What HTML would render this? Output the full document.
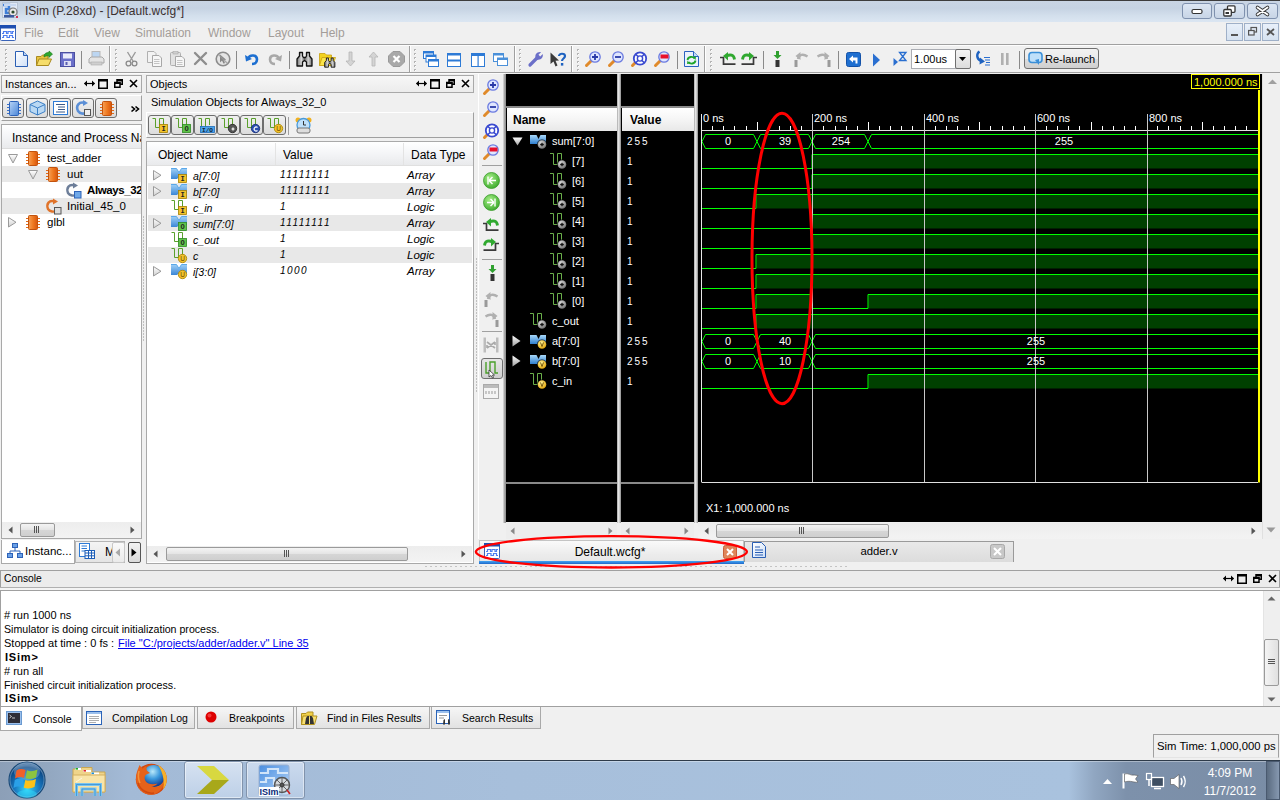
<!DOCTYPE html><html><head><meta charset="utf-8"><style>
html,body{margin:0;padding:0;width:1280px;height:800px;overflow:hidden;background:#f0f0f0;position:relative}
.t{position:absolute;white-space:nowrap;line-height:1;font-family:"Liberation Sans",sans-serif}
.r{position:absolute;display:block}
svg.r{overflow:visible}
</style></head><body><svg width="0" height="0" style="position:absolute"><defs><linearGradient id="gdoc" x1="0" y1="0" x2="1" y2="1"><stop offset="0" stop-color="#fff"/><stop offset="1" stop-color="#cfe0f7"/></linearGradient><linearGradient id="gchip" x1="0" y1="0" x2="1" y2="0"><stop offset="0" stop-color="#f7a055"/><stop offset="0.5" stop-color="#ef7a22"/><stop offset="1" stop-color="#d9560c"/></linearGradient><linearGradient id="gtri" x1="0" y1="0" x2="0" y2="1"><stop offset="0" stop-color="#fff"/><stop offset="1" stop-color="#cfcfcf"/></linearGradient><linearGradient id="gbus" x1="0" y1="0" x2="0" y2="1"><stop offset="0" stop-color="#9fd0f7"/><stop offset="1" stop-color="#3b86d6"/></linearGradient><radialGradient id="ggreen" cx="0.4" cy="0.35" r="0.7"><stop offset="0" stop-color="#a8f08a"/><stop offset="1" stop-color="#3aa82a"/></radialGradient><linearGradient id="gbus2" x1="0" y1="0" x2="0" y2="1"><stop offset="0" stop-color="#a8d8fa"/><stop offset="1" stop-color="#2f7fd0"/></linearGradient><radialGradient id="ggray" cx="0.4" cy="0.35" r="0.7"><stop offset="0" stop-color="#e8e8e8"/><stop offset="1" stop-color="#6a6a6a"/></radialGradient><radialGradient id="gyel" cx="0.4" cy="0.35" r="0.7"><stop offset="0" stop-color="#fff6a0"/><stop offset="1" stop-color="#e0a000"/></radialGradient><linearGradient id="gtri2" x1="0" y1="0" x2="0" y2="1"><stop offset="0" stop-color="#fff"/><stop offset="1" stop-color="#a0a0a0"/></linearGradient><radialGradient id="gorb" cx="0.5" cy="0.75" r="0.75"><stop offset="0" stop-color="#38d8f8"/><stop offset="0.45" stop-color="#1878c0"/><stop offset="0.8" stop-color="#0c4a88"/><stop offset="1" stop-color="#6a90b8"/></radialGradient><linearGradient id="gisim" x1="0" y1="0" x2="1" y2="1"><stop offset="0" stop-color="#4a8ee0"/><stop offset="0.6" stop-color="#8ab8ee"/><stop offset="1" stop-color="#d8e8f8"/></linearGradient><radialGradient id="gff" cx="0.55" cy="0.4" r="0.6"><stop offset="0" stop-color="#6ac0f0"/><stop offset="1" stop-color="#1e4fa8"/></radialGradient><radialGradient id="gfox" cx="0.5" cy="0.5" r="0.5"><stop offset="0.6" stop-color="#f08a28"/><stop offset="1" stop-color="#d0400c"/></radialGradient><radialGradient id="gglobe" cx="0.45" cy="0.3" r="0.75"><stop offset="0" stop-color="#b8e8fa"/><stop offset="0.45" stop-color="#3a98dc"/><stop offset="1" stop-color="#0c2a80"/></radialGradient><linearGradient id="gbino" x1="0" y1="0" x2="1" y2="0"><stop offset="0" stop-color="#777"/><stop offset="0.3" stop-color="#d8d8d8"/><stop offset="0.5" stop-color="#666"/><stop offset="0.75" stop-color="#d0d0d0"/><stop offset="1" stop-color="#777"/></linearGradient><linearGradient id="gbluechip" x1="0" y1="0" x2="1" y2="1"><stop offset="0" stop-color="#b8d4f6"/><stop offset="1" stop-color="#4a86d8"/></linearGradient></defs></svg>
<div class="r" style="left:0px;top:0px;width:1280px;height:1px;background:#3d3d3d"></div>
<div class="r" style="left:0px;top:1px;width:1280px;height:21px;background:linear-gradient(#c9d5e4 0%,#c6d3e3 35%,#d3dfec 70%,#dbe6f2 100%)"></div>
<svg class="r" style="left:2px;top:2px;" width="17" height="16" viewBox="0 0 17 16"><rect x="0.5" y="0.5" width="15" height="15" fill="#dfe8f5" stroke="#b8c4d4"/><path d="M1 3 H7 V7 H4 V11 H8" fill="none" stroke="#3f7fd8" stroke-width="2.5"/><rect x="2" y="2" width="12" height="2" fill="#c8d8f0"/><circle cx="11" cy="10" r="4" fill="#e8e8e8" stroke="#777" stroke-width="1.2"/><circle cx="11" cy="10" r="1.6" fill="#2a4a2a"/><rect x="2" y="13" width="10" height="2.5" fill="#3a5aa0"/><rect x="14" y="14" width="2" height="2" fill="#d03050"/></svg>
<div class="t " style="left:25px;top:4.84px;font-size:12px;color:#3b3030;font-weight:normal;font-style:normal;">ISim (P.28xd) - [Default.wcfg*]</div>
<div class="r" style="left:1182px;top:3px;width:30px;height:16px;border:1px solid #7f91ae;border-radius:3px;box-sizing:border-box;background:linear-gradient(#dce6f3,#c8d5e6)"></div>

<svg class="r" style="left:1191px;top:8px;" width="12" height="7" viewBox="0 0 12 7"><rect x="1" y="1.5" width="10" height="4" rx="1.5" fill="#fff" stroke="#333" stroke-width="1.2"/></svg>
<div class="r" style="left:1214px;top:3px;width:31px;height:16px;border:1px solid #7f91ae;border-radius:3px;box-sizing:border-box;background:linear-gradient(#dce6f3,#c8d5e6)"></div>

<svg class="r" style="left:1223px;top:5px;" width="13" height="12" viewBox="0 0 13 12"><rect x="4.5" y="0.8" width="7.5" height="6.5" rx="1" fill="#fff" stroke="#333" stroke-width="1.3"/><rect x="0.8" y="4.5" width="7.5" height="6.5" rx="1" fill="#fff" stroke="#333" stroke-width="1.3"/><rect x="2.5" y="7" width="3.5" height="2" fill="#333"/></svg>
<div class="r" style="left:1247px;top:3px;width:31px;height:16px;border:1px solid #7f91ae;border-radius:3px;box-sizing:border-box;background:linear-gradient(#dce6f3,#c8d5e6)"></div>

<svg class="r" style="left:1256px;top:6px;" width="13" height="10" viewBox="0 0 13 10"><path d="M1.5 1.5 L11.5 8.5 M11.5 1.5 L1.5 8.5" stroke="#333" stroke-width="3.6" stroke-linecap="round"/><path d="M1.5 1.5 L11.5 8.5 M11.5 1.5 L1.5 8.5" stroke="#fff" stroke-width="1.8" stroke-linecap="round"/></svg>
<div class="r" style="left:0px;top:22px;width:1280px;height:22px;background:#f0f0f0"></div>
<svg class="r" style="left:0px;top:25px;" width="16" height="16" viewBox="0 0 16 16"><rect x="0.5" y="0.5" width="15" height="15" rx="1" fill="#fff" stroke="#3a64b8"/><rect x="0" y="0" width="16" height="3.5" fill="#1f4fb0"/><path d="M2 8.5 H3.5 V6.5 H6.5 V8.5 H8 V6.5 H11 V8.5 H12.5 V6.5 H14" fill="none" stroke="#4f7ff0" stroke-width="1.2"/><path d="M2 12.5 H3.5 V10.5 H7 V12.5 H9.5 V10.5 H12.5 V12.5 H14" fill="none" stroke="#4f7ff0" stroke-width="1.2"/></svg>
<div class="t " style="left:24px;top:26.84px;font-size:12px;color:#a39d99;font-weight:normal;font-style:normal;">File</div>
<div class="t " style="left:58px;top:26.84px;font-size:12px;color:#a39d99;font-weight:normal;font-style:normal;">Edit</div>
<div class="t " style="left:94px;top:26.84px;font-size:12px;color:#a39d99;font-weight:normal;font-style:normal;">View</div>
<div class="t " style="left:135px;top:26.84px;font-size:12px;color:#a39d99;font-weight:normal;font-style:normal;">Simulation</div>
<div class="t " style="left:208px;top:26.84px;font-size:12px;color:#a39d99;font-weight:normal;font-style:normal;">Window</div>
<div class="t " style="left:268px;top:26.84px;font-size:12px;color:#a39d99;font-weight:normal;font-style:normal;">Layout</div>
<div class="t " style="left:320px;top:26.84px;font-size:12px;color:#a39d99;font-weight:normal;font-style:normal;">Help</div>
<div class="r" style="left:1226px;top:23px;width:17px;height:18px;border:1px solid #9fb0c8;box-sizing:border-box;background:linear-gradient(#e8f0fa,#d6e2f0)"></div>
<div class="r" style="left:1244px;top:23px;width:17px;height:18px;border:1px solid #9fb0c8;box-sizing:border-box;background:linear-gradient(#e8f0fa,#d6e2f0)"></div>
<div class="r" style="left:1262px;top:23px;width:17px;height:18px;border:1px solid #9fb0c8;box-sizing:border-box;background:linear-gradient(#e8f0fa,#d6e2f0)"></div>
<svg class="r" style="left:1230px;top:33px;" width="9" height="4" viewBox="0 0 9 4"><rect x="1" y="1" width="7" height="2" fill="#555"/></svg>
<svg class="r" style="left:1248px;top:27px;" width="9" height="9" viewBox="0 0 9 9"><rect x="3" y="0.5" width="5.5" height="4.5" fill="none" stroke="#555" stroke-width="1.2"/><rect x="0.6" y="3.5" width="5.5" height="4.5" fill="#e3ebf6" stroke="#555" stroke-width="1.2"/></svg>
<svg class="r" style="left:1266px;top:28px;" width="9" height="8" viewBox="0 0 9 8"><path d="M1 1 L8 7 M8 1 L1 7" stroke="#555" stroke-width="1.8"/></svg>
<div class="r" style="left:0px;top:44px;width:1280px;height:1px;background:#a0a0a0"></div>
<div class="r" style="left:0px;top:45px;width:1280px;height:1px;background:#fdfdfd"></div>
<div class="r" style="left:0px;top:46px;width:1280px;height:26px;background:#f0f0f0"></div>
<div class="r" style="left:0px;top:72px;width:1280px;height:1px;background:#a0a0a0"></div>
<div class="r" style="left:0px;top:73px;width:1280px;height:1px;background:#fbfbfb"></div>
<div class="r" style="left:6px;top:50px;width:1px;height:1px;background:#ffffff"></div>
<div class="r" style="left:5px;top:49px;width:2px;height:1px;background:#b4b4b4"></div>
<div class="r" style="left:5px;top:50px;width:1px;height:1px;background:#b4b4b4"></div>
<div class="r" style="left:6px;top:54px;width:1px;height:1px;background:#ffffff"></div>
<div class="r" style="left:5px;top:53px;width:2px;height:1px;background:#b4b4b4"></div>
<div class="r" style="left:5px;top:54px;width:1px;height:1px;background:#b4b4b4"></div>
<div class="r" style="left:6px;top:58px;width:1px;height:1px;background:#ffffff"></div>
<div class="r" style="left:5px;top:57px;width:2px;height:1px;background:#b4b4b4"></div>
<div class="r" style="left:5px;top:58px;width:1px;height:1px;background:#b4b4b4"></div>
<div class="r" style="left:6px;top:62px;width:1px;height:1px;background:#ffffff"></div>
<div class="r" style="left:5px;top:61px;width:2px;height:1px;background:#b4b4b4"></div>
<div class="r" style="left:5px;top:62px;width:1px;height:1px;background:#b4b4b4"></div>
<div class="r" style="left:6px;top:66px;width:1px;height:1px;background:#ffffff"></div>
<div class="r" style="left:5px;top:65px;width:2px;height:1px;background:#b4b4b4"></div>
<div class="r" style="left:5px;top:66px;width:1px;height:1px;background:#b4b4b4"></div>
<div class="r" style="left:6px;top:70px;width:1px;height:1px;background:#ffffff"></div>
<div class="r" style="left:5px;top:69px;width:2px;height:1px;background:#b4b4b4"></div>
<div class="r" style="left:5px;top:70px;width:1px;height:1px;background:#b4b4b4"></div>
<div class="r" style="left:116px;top:50px;width:1px;height:1px;background:#ffffff"></div>
<div class="r" style="left:115px;top:49px;width:2px;height:1px;background:#b4b4b4"></div>
<div class="r" style="left:115px;top:50px;width:1px;height:1px;background:#b4b4b4"></div>
<div class="r" style="left:116px;top:54px;width:1px;height:1px;background:#ffffff"></div>
<div class="r" style="left:115px;top:53px;width:2px;height:1px;background:#b4b4b4"></div>
<div class="r" style="left:115px;top:54px;width:1px;height:1px;background:#b4b4b4"></div>
<div class="r" style="left:116px;top:58px;width:1px;height:1px;background:#ffffff"></div>
<div class="r" style="left:115px;top:57px;width:2px;height:1px;background:#b4b4b4"></div>
<div class="r" style="left:115px;top:58px;width:1px;height:1px;background:#b4b4b4"></div>
<div class="r" style="left:116px;top:62px;width:1px;height:1px;background:#ffffff"></div>
<div class="r" style="left:115px;top:61px;width:2px;height:1px;background:#b4b4b4"></div>
<div class="r" style="left:115px;top:62px;width:1px;height:1px;background:#b4b4b4"></div>
<div class="r" style="left:116px;top:66px;width:1px;height:1px;background:#ffffff"></div>
<div class="r" style="left:115px;top:65px;width:2px;height:1px;background:#b4b4b4"></div>
<div class="r" style="left:115px;top:66px;width:1px;height:1px;background:#b4b4b4"></div>
<div class="r" style="left:116px;top:70px;width:1px;height:1px;background:#ffffff"></div>
<div class="r" style="left:115px;top:69px;width:2px;height:1px;background:#b4b4b4"></div>
<div class="r" style="left:115px;top:70px;width:1px;height:1px;background:#b4b4b4"></div>
<div class="r" style="left:415px;top:50px;width:1px;height:1px;background:#ffffff"></div>
<div class="r" style="left:414px;top:49px;width:2px;height:1px;background:#b4b4b4"></div>
<div class="r" style="left:414px;top:50px;width:1px;height:1px;background:#b4b4b4"></div>
<div class="r" style="left:415px;top:54px;width:1px;height:1px;background:#ffffff"></div>
<div class="r" style="left:414px;top:53px;width:2px;height:1px;background:#b4b4b4"></div>
<div class="r" style="left:414px;top:54px;width:1px;height:1px;background:#b4b4b4"></div>
<div class="r" style="left:415px;top:58px;width:1px;height:1px;background:#ffffff"></div>
<div class="r" style="left:414px;top:57px;width:2px;height:1px;background:#b4b4b4"></div>
<div class="r" style="left:414px;top:58px;width:1px;height:1px;background:#b4b4b4"></div>
<div class="r" style="left:415px;top:62px;width:1px;height:1px;background:#ffffff"></div>
<div class="r" style="left:414px;top:61px;width:2px;height:1px;background:#b4b4b4"></div>
<div class="r" style="left:414px;top:62px;width:1px;height:1px;background:#b4b4b4"></div>
<div class="r" style="left:415px;top:66px;width:1px;height:1px;background:#ffffff"></div>
<div class="r" style="left:414px;top:65px;width:2px;height:1px;background:#b4b4b4"></div>
<div class="r" style="left:414px;top:66px;width:1px;height:1px;background:#b4b4b4"></div>
<div class="r" style="left:415px;top:70px;width:1px;height:1px;background:#ffffff"></div>
<div class="r" style="left:414px;top:69px;width:2px;height:1px;background:#b4b4b4"></div>
<div class="r" style="left:414px;top:70px;width:1px;height:1px;background:#b4b4b4"></div>
<div class="r" style="left:520px;top:50px;width:1px;height:1px;background:#ffffff"></div>
<div class="r" style="left:519px;top:49px;width:2px;height:1px;background:#b4b4b4"></div>
<div class="r" style="left:519px;top:50px;width:1px;height:1px;background:#b4b4b4"></div>
<div class="r" style="left:520px;top:54px;width:1px;height:1px;background:#ffffff"></div>
<div class="r" style="left:519px;top:53px;width:2px;height:1px;background:#b4b4b4"></div>
<div class="r" style="left:519px;top:54px;width:1px;height:1px;background:#b4b4b4"></div>
<div class="r" style="left:520px;top:58px;width:1px;height:1px;background:#ffffff"></div>
<div class="r" style="left:519px;top:57px;width:2px;height:1px;background:#b4b4b4"></div>
<div class="r" style="left:519px;top:58px;width:1px;height:1px;background:#b4b4b4"></div>
<div class="r" style="left:520px;top:62px;width:1px;height:1px;background:#ffffff"></div>
<div class="r" style="left:519px;top:61px;width:2px;height:1px;background:#b4b4b4"></div>
<div class="r" style="left:519px;top:62px;width:1px;height:1px;background:#b4b4b4"></div>
<div class="r" style="left:520px;top:66px;width:1px;height:1px;background:#ffffff"></div>
<div class="r" style="left:519px;top:65px;width:2px;height:1px;background:#b4b4b4"></div>
<div class="r" style="left:519px;top:66px;width:1px;height:1px;background:#b4b4b4"></div>
<div class="r" style="left:520px;top:70px;width:1px;height:1px;background:#ffffff"></div>
<div class="r" style="left:519px;top:69px;width:2px;height:1px;background:#b4b4b4"></div>
<div class="r" style="left:519px;top:70px;width:1px;height:1px;background:#b4b4b4"></div>
<div class="r" style="left:578px;top:50px;width:1px;height:1px;background:#ffffff"></div>
<div class="r" style="left:577px;top:49px;width:2px;height:1px;background:#b4b4b4"></div>
<div class="r" style="left:577px;top:50px;width:1px;height:1px;background:#b4b4b4"></div>
<div class="r" style="left:578px;top:54px;width:1px;height:1px;background:#ffffff"></div>
<div class="r" style="left:577px;top:53px;width:2px;height:1px;background:#b4b4b4"></div>
<div class="r" style="left:577px;top:54px;width:1px;height:1px;background:#b4b4b4"></div>
<div class="r" style="left:578px;top:58px;width:1px;height:1px;background:#ffffff"></div>
<div class="r" style="left:577px;top:57px;width:2px;height:1px;background:#b4b4b4"></div>
<div class="r" style="left:577px;top:58px;width:1px;height:1px;background:#b4b4b4"></div>
<div class="r" style="left:578px;top:62px;width:1px;height:1px;background:#ffffff"></div>
<div class="r" style="left:577px;top:61px;width:2px;height:1px;background:#b4b4b4"></div>
<div class="r" style="left:577px;top:62px;width:1px;height:1px;background:#b4b4b4"></div>
<div class="r" style="left:578px;top:66px;width:1px;height:1px;background:#ffffff"></div>
<div class="r" style="left:577px;top:65px;width:2px;height:1px;background:#b4b4b4"></div>
<div class="r" style="left:577px;top:66px;width:1px;height:1px;background:#b4b4b4"></div>
<div class="r" style="left:578px;top:70px;width:1px;height:1px;background:#ffffff"></div>
<div class="r" style="left:577px;top:69px;width:2px;height:1px;background:#b4b4b4"></div>
<div class="r" style="left:577px;top:70px;width:1px;height:1px;background:#b4b4b4"></div>
<div class="r" style="left:711px;top:50px;width:1px;height:1px;background:#ffffff"></div>
<div class="r" style="left:710px;top:49px;width:2px;height:1px;background:#b4b4b4"></div>
<div class="r" style="left:710px;top:50px;width:1px;height:1px;background:#b4b4b4"></div>
<div class="r" style="left:711px;top:54px;width:1px;height:1px;background:#ffffff"></div>
<div class="r" style="left:710px;top:53px;width:2px;height:1px;background:#b4b4b4"></div>
<div class="r" style="left:710px;top:54px;width:1px;height:1px;background:#b4b4b4"></div>
<div class="r" style="left:711px;top:58px;width:1px;height:1px;background:#ffffff"></div>
<div class="r" style="left:710px;top:57px;width:2px;height:1px;background:#b4b4b4"></div>
<div class="r" style="left:710px;top:58px;width:1px;height:1px;background:#b4b4b4"></div>
<div class="r" style="left:711px;top:62px;width:1px;height:1px;background:#ffffff"></div>
<div class="r" style="left:710px;top:61px;width:2px;height:1px;background:#b4b4b4"></div>
<div class="r" style="left:710px;top:62px;width:1px;height:1px;background:#b4b4b4"></div>
<div class="r" style="left:711px;top:66px;width:1px;height:1px;background:#ffffff"></div>
<div class="r" style="left:710px;top:65px;width:2px;height:1px;background:#b4b4b4"></div>
<div class="r" style="left:710px;top:66px;width:1px;height:1px;background:#b4b4b4"></div>
<div class="r" style="left:711px;top:70px;width:1px;height:1px;background:#ffffff"></div>
<div class="r" style="left:710px;top:69px;width:2px;height:1px;background:#b4b4b4"></div>
<div class="r" style="left:710px;top:70px;width:1px;height:1px;background:#b4b4b4"></div>
<div class="r" style="left:109px;top:46px;width:1px;height:26px;background:#a0a0a0"></div>
<div class="r" style="left:110px;top:46px;width:1px;height:26px;background:#fff"></div>
<div class="r" style="left:409px;top:46px;width:1px;height:26px;background:#a0a0a0"></div>
<div class="r" style="left:410px;top:46px;width:1px;height:26px;background:#fff"></div>
<div class="r" style="left:514px;top:46px;width:1px;height:26px;background:#a0a0a0"></div>
<div class="r" style="left:515px;top:46px;width:1px;height:26px;background:#fff"></div>
<div class="r" style="left:571px;top:46px;width:1px;height:26px;background:#a0a0a0"></div>
<div class="r" style="left:572px;top:46px;width:1px;height:26px;background:#fff"></div>
<div class="r" style="left:704px;top:46px;width:1px;height:26px;background:#a0a0a0"></div>
<div class="r" style="left:705px;top:46px;width:1px;height:26px;background:#fff"></div>
<div class="r" style="left:81px;top:51px;width:1px;height:18px;background:#8a8a8a"></div>
<div class="r" style="left:236px;top:51px;width:1px;height:18px;background:#8a8a8a"></div>
<div class="r" style="left:289px;top:51px;width:1px;height:18px;background:#8a8a8a"></div>
<div class="r" style="left:677px;top:51px;width:1px;height:18px;background:#8a8a8a"></div>
<div class="r" style="left:763px;top:51px;width:1px;height:18px;background:#8a8a8a"></div>
<div class="r" style="left:838px;top:51px;width:1px;height:18px;background:#8a8a8a"></div>
<div class="r" style="left:1019px;top:51px;width:1px;height:18px;background:#8a8a8a"></div>
<svg class="r" style="left:14px;top:51px;" width="15" height="16" viewBox="0 0 15 16"><path d="M1.5 0.5 H9.5 L13.5 4.5 V15.5 H1.5 Z" fill="url(#gdoc)" stroke="#2b5fb4"/><path d="M9.5 0.5 V4.5 H13.5" fill="#b9d3f5" stroke="#2b5fb4"/></svg>
<svg class="r" style="left:36px;top:51px;" width="17" height="16" viewBox="0 0 17 16"><path d="M0.5 5.5 H5 L6.5 4 H12 V14.5 H0.5Z" fill="#e8c440" stroke="#a98a20"/><path d="M0.5 14.5 L3 8 H15.5 L12.5 14.5Z" fill="#f6dd6a" stroke="#a98a20"/><path d="M8 6 C8 2.5 10 1.5 13 1.5 V0 L16.5 3 L13 6.5 V4.8 C11 4.8 9.5 5 8 6Z" fill="#2ea82e" stroke="#16751a" stroke-width="0.6"/></svg>
<svg class="r" style="left:60px;top:52px;" width="15" height="15" viewBox="0 0 15 15"><rect x="0.5" y="0.5" width="14" height="14" fill="#6a6fc9" stroke="#4b4fa0"/><rect x="3" y="1.5" width="9" height="5" fill="#e9ebfa"/><rect x="4" y="9" width="7" height="5" fill="#dfe0f5"/><rect x="5.5" y="10" width="2" height="3" fill="#5a5fb0"/></svg>
<svg class="r" style="left:88px;top:51px;" width="17" height="16" viewBox="0 0 17 16"><rect x="4" y="0.5" width="8" height="6" fill="#bcd6f2" stroke="#b8b8b8"/><path d="M1 8 L3 6 H14 L16 8 V12 H1Z" fill="#e4e4e4" stroke="#a8a8a8"/><rect x="3" y="11" width="11" height="3" fill="#cfcfcf" stroke="#aaa" stroke-width="0.6"/></svg>
<svg class="r" style="left:125px;top:51px;" width="13" height="16" viewBox="0 0 13 16"><path d="M2.5 1 L8 10 M10.5 1 L5 10" stroke="#9a9a9a" stroke-width="1.4"/><circle cx="3.5" cy="12.5" r="2.4" fill="none" stroke="#8a8a8a" stroke-width="1.3"/><circle cx="9.5" cy="12.5" r="2.4" fill="none" stroke="#8a8a8a" stroke-width="1.3"/></svg>
<svg class="r" style="left:147px;top:51px;" width="15" height="16" viewBox="0 0 15 16"><path d="M0.5 0.5 H7 L9 2.5 V11.5 H0.5Z" fill="#f3f3f3" stroke="#b0b0b0"/><path d="M5.5 4.5 H12 L14.5 7 V15.5 H5.5Z" fill="#f7f7f7" stroke="#a8a8a8"/><path d="M7 8.5 H12.5 M7 10.5 H12.5 M7 12.5 H12.5" stroke="#c4c4c4"/></svg>
<svg class="r" style="left:170px;top:51px;" width="15" height="16" viewBox="0 0 15 16"><rect x="0.5" y="1.5" width="10" height="13" rx="1" fill="#e2e2e2" stroke="#b0b0b0"/><rect x="3" y="0.5" width="5" height="2.5" fill="#cfcfcf" stroke="#aaa" stroke-width="0.6"/><path d="M5.5 5.5 H12 L14.5 8 V15.5 H5.5Z" fill="#f7f7f7" stroke="#a8a8a8"/><path d="M7 9.5 H12.5 M7 11.5 H12.5 M7 13.5 H12.5" stroke="#c4c4c4"/></svg>
<svg class="r" style="left:193px;top:51px;" width="15" height="15" viewBox="0 0 15 15"><path d="M2 2 L13 13 M13 2 L2 13" stroke="#8e8e8e" stroke-width="2.4" stroke-linecap="round"/></svg>
<svg class="r" style="left:215px;top:51px;" width="16" height="16" viewBox="0 0 16 16"><circle cx="8" cy="8" r="6.8" fill="#e4e4e4" stroke="#8c8c8c" stroke-width="1.6"/><path d="M5 3.5 L5 11.5 L7 9.6 L8.6 12.8 L10 12.1 L8.6 9 L11.2 8.8Z" fill="#858585"/><path d="M3.5 3.5 L12.5 12.5" stroke="#9a9a9a" stroke-width="1.3" opacity="0.8"/></svg>
<svg class="r" style="left:245px;top:53px;" width="14" height="12" viewBox="0 0 14 12"><path d="M3.5 5 C5 1.5 12 1.5 12 6.5 C12 9.5 9.5 11 7 11" fill="none" stroke="#1d6fd1" stroke-width="2.6"/><path d="M0 2 L1 8.5 L7 6Z" fill="#1d6fd1"/></svg>
<svg class="r" style="left:268px;top:53px;" width="14" height="12" viewBox="0 0 14 12"><path d="M10.5 5 C9 1.5 2 1.5 2 6.5 C2 9.5 4.5 11 7 11" fill="none" stroke="#a8a8a8" stroke-width="2.6"/><path d="M14 2 L13 8.5 L7 6Z" fill="#a8a8a8"/></svg>
<svg class="r" style="left:296px;top:51px;" width="17" height="16" viewBox="0 0 17 16"><path d="M3.5 1.5 H6.5 V5 L7.5 6.5 H9.5 L10.5 5 V1.5 H13.5 V5 L16 8 V15 H10.5 V11 L8.5 9.5 L6.5 11 V15 H1 V8 L3.5 5Z" fill="url(#gbino)" stroke="#111" stroke-width="1.3" stroke-linejoin="round"/></svg>
<svg class="r" style="left:319px;top:51px;" width="17" height="16" viewBox="0 0 17 16"><path d="M0.5 2.5 H6 L7.5 4 H12.5 V14.5 H0.5Z" fill="#f2d21e" stroke="#c8a010" stroke-width="0.8"/><path d="M0.5 14.5 L3 6.5 H16.5 L13.5 14.5Z" fill="#fbe54a" stroke="#c8a010" stroke-width="0.8"/><g transform="translate(5,6) scale(0.68)"><path d="M3.5 1.5 H6.5 V5 L7.5 6.5 H9.5 L10.5 5 V1.5 H13.5 V5 L16 8 V15 H10.5 V11 L8.5 9.5 L6.5 11 V15 H1 V8 L3.5 5Z" fill="url(#gbino)" stroke="#111" stroke-width="1.3" stroke-linejoin="round"/></g></svg>
<svg class="r" style="left:346px;top:51px;" width="9" height="16" viewBox="0 0 9 16"><path d="M3 1 H6 V10 H9 L4.5 15 L0 10 H3Z" fill="#d4d4d4" stroke="#b5b5b5" stroke-width="0.8"/></svg>
<svg class="r" style="left:369px;top:51px;" width="9" height="16" viewBox="0 0 9 16"><path d="M3 15 H6 V6 H9 L4.5 1 L0 6 H3Z" fill="#d4d4d4" stroke="#b5b5b5" stroke-width="0.8"/></svg>
<svg class="r" style="left:388px;top:51px;" width="17" height="16" viewBox="0 0 17 16"><path d="M5 0.5 H12 L16.5 5 V11 L12 15.5 H5 L0.5 11 V5Z" fill="#a9a9a9" stroke="#9a9a9a"/><path d="M5.5 5 L11.5 11 M11.5 5 L5.5 11" stroke="#fff" stroke-width="2.2"/></svg>
<svg class="r" style="left:423px;top:51px;" width="16" height="16" viewBox="0 0 16 16"><rect x="0.5" y="0.5" width="10" height="7" fill="#fff" stroke="#2e7bd6"/><rect x="0.5" y="0.5" width="10" height="2" fill="#2e7bd6"/><rect x="3" y="4" width="10" height="7" fill="#fff" stroke="#2e7bd6"/><rect x="3" y="4" width="10" height="2" fill="#2e7bd6"/><rect x="5.5" y="8.5" width="10" height="7" fill="#fff" stroke="#2e7bd6"/><rect x="5.5" y="8.5" width="10" height="2" fill="#2e7bd6"/></svg>
<svg class="r" style="left:447px;top:53px;" width="14" height="14" viewBox="0 0 14 14"><rect x="0.5" y="0.5" width="13" height="13" fill="#fff" stroke="#2e7bd6"/><rect x="0.5" y="0.5" width="13" height="2" fill="#2e7bd6"/><rect x="0.5" y="6.5" width="13" height="2" fill="#2e7bd6"/></svg>
<svg class="r" style="left:471px;top:53px;" width="14" height="14" viewBox="0 0 14 14"><rect x="0.5" y="0.5" width="13" height="13" fill="#fff" stroke="#2e7bd6"/><rect x="0.5" y="0.5" width="13" height="2.5" fill="#2e7bd6"/><rect x="6.5" y="2" width="1.2" height="11" fill="#2e7bd6"/></svg>
<svg class="r" style="left:493px;top:53px;" width="15" height="13" viewBox="0 0 15 13"><rect x="0.5" y="0.5" width="10" height="8" fill="#fff" stroke="#4a90d9"/><rect x="0.5" y="0.5" width="10" height="2" fill="#4a90d9"/><rect x="4.5" y="5" width="10" height="7.5" fill="#fff" stroke="#4a90d9"/><rect x="4.5" y="5" width="10" height="2" fill="#4a90d9"/></svg>
<svg class="r" style="left:528px;top:51px;" width="16" height="16" viewBox="0 0 16 16"><path d="M2 14 L9 7" stroke="#6b6fc8" stroke-width="3.2" stroke-linecap="round"/><path d="M8 8 C6 4 9 0.5 13 1.2 L10.5 3.8 L12.2 5.5 L14.8 3 C15.5 7 12 10 8 8Z" fill="#6b6fc8"/></svg>
<svg class="r" style="left:550px;top:52px;" width="16" height="16" viewBox="0 0 16 16"><path d="M0.5 0.5 L0.5 12 L3.5 9.5 L5.5 14.5 L7.5 13.5 L5.5 8.7 L9 8.5Z" fill="#3a3a3a"/><path d="M9 4 C9 1 15 1 15 4 C15 6.5 12 6.5 12 9" fill="none" stroke="#1e62c0" stroke-width="2.2"/><rect x="10.9" y="11" width="2.4" height="2.6" fill="#1e62c0"/></svg>
<svg class="r" style="left:585px;top:51px;" width="16" height="16" viewBox="0 0 16 16"><path d="M1.5 14.5 L6 10" stroke="#e08a2a" stroke-width="3" stroke-linecap="round"/><circle cx="10" cy="6" r="5.2" fill="#dfe6ff" stroke="#6a7ae0" stroke-width="1.3"/><path d="M7 6 H13 M10 3 V9" stroke="#2a3aa8" stroke-width="1.8"/></svg>
<svg class="r" style="left:608px;top:51px;" width="16" height="16" viewBox="0 0 16 16"><path d="M1.5 14.5 L6 10" stroke="#e08a2a" stroke-width="3" stroke-linecap="round"/><circle cx="10" cy="6" r="5.2" fill="#dfe6ff" stroke="#6a7ae0" stroke-width="1.3"/><path d="M7 6 H13" stroke="#2a3aa8" stroke-width="1.8"/></svg>
<svg class="r" style="left:631px;top:51px;" width="16" height="16" viewBox="0 0 16 16"><path d="M1.5 14.5 L4 12" stroke="#e08a2a" stroke-width="3" stroke-linecap="round"/><circle cx="9" cy="7.5" r="6.2" fill="#fff" stroke="#3a4ad0" stroke-width="1.8"/><circle cx="9" cy="7.5" r="2.6" fill="#fff" stroke="#3a4ad0" stroke-width="1.4"/><path d="M4.5 3 L7 5.5 M13.5 3 L11 5.5 M4.5 12 L7 9.5 M13.5 12 L11 9.5" stroke="#3a4ad0" stroke-width="1.6"/></svg>
<svg class="r" style="left:654px;top:51px;" width="16" height="16" viewBox="0 0 16 16"><path d="M1.5 14.5 L6 10" stroke="#e08a2a" stroke-width="3" stroke-linecap="round"/><circle cx="10" cy="6" r="5.2" fill="#dfe6ff" stroke="#6a7ae0" stroke-width="1.3"/><rect x="6.5" y="3.5" width="8" height="4" fill="#e8102a"/></svg>
<svg class="r" style="left:684px;top:51px;" width="15" height="16" viewBox="0 0 15 16"><path d="M0.5 0.5 H9.5 L14.5 5.5 V15.5 H0.5Z" fill="#eaf2fc" stroke="#2b62c0"/><path d="M9.5 0.5 V5.5 H14.5" fill="#c5dcf5" stroke="#2b62c0"/><path d="M3.5 9 C4 5.5 9 5 10.5 7.5" fill="none" stroke="#1fa52a" stroke-width="1.8"/><path d="M11.5 9.5 C11 13 6 13.5 4.5 11" fill="none" stroke="#1fa52a" stroke-width="1.8"/><path d="M9 6 L12 5.5 L11.5 9Z M6 12.5 L3 13 L3.5 9.5Z" fill="#1fa52a"/></svg>
<svg class="r" style="left:720px;top:52px;" width="16" height="15" viewBox="0 0 16 15"><path d="M0 5.5 H3.5 V12.2 H15.5" fill="none" stroke="#3a3a3a" stroke-width="1.7"/><path d="M6.5 4 C10 2.2 14 2.5 14.5 7.5" fill="none" stroke="#2fa82f" stroke-width="2.8"/><path d="M3 4 L8 0 V8.5Z" fill="#2fa82f"/></svg>
<svg class="r" style="left:741px;top:52px;" width="16" height="15" viewBox="0 0 16 15"><path d="M0.5 12.2 H12.5 V5.5 H16" fill="none" stroke="#3a3a3a" stroke-width="1.7"/><path d="M9.5 4 C6 2.2 2 2.5 1.5 7.5" fill="none" stroke="#2fa82f" stroke-width="2.8"/><path d="M13 4 L8 0 V8.5Z" fill="#2fa82f"/></svg>
<svg class="r" style="left:773px;top:51px;" width="9" height="16" viewBox="0 0 9 16"><path d="M3 0 H6 V4 H8.5 L4.5 8 L0.5 4 H3Z" fill="#2fa02f"/><rect x="2.5" y="9" width="4" height="7" fill="#333"/></svg>
<svg class="r" style="left:794px;top:51px;" width="15" height="16" viewBox="0 0 15 16"><rect x="0.5" y="9" width="3" height="7" fill="#9a9a9a"/><path d="M4 8 C5 3.5 9 2.5 13.5 5.5" fill="none" stroke="#b0b0b0" stroke-width="2.4"/><path d="M1.5 5 L6.5 1 L6.5 9Z" fill="#b0b0b0"/></svg>
<svg class="r" style="left:816px;top:51px;" width="15" height="16" viewBox="0 0 15 16"><rect x="11.5" y="9" width="3" height="7" fill="#9a9a9a"/><path d="M11 8 C10 3.5 6 2.5 1.5 5.5" fill="none" stroke="#b0b0b0" stroke-width="2.4"/><path d="M13.5 5 L8.5 1 L8.5 9Z" fill="#b0b0b0"/></svg>
<svg class="r" style="left:846px;top:52px;" width="15" height="15" viewBox="0 0 15 15"><rect x="0.5" y="0.5" width="14" height="14" rx="2" fill="#1f6fd0" stroke="#1452a8"/><path d="M3 7 L7 3.5 V5.5 H11.5 V11.5 H9.5 V8.5 H7 V10.5Z" fill="#fff"/></svg>
<svg class="r" style="left:872px;top:53px;" width="9" height="14" viewBox="0 0 9 14"><path d="M1 0.5 L8 7 L1 13.5Z" fill="#2a6fd0"/></svg>
<svg class="r" style="left:893px;top:52px;" width="14" height="15" viewBox="0 0 14 15"><path d="M0.5 6 L5 10 L0.5 14Z" fill="#2a6fd0"/><path d="M6.5 0.5 H13 L9.75 4.5 L13 8.5 H6.5 L9.75 4.5Z" fill="none" stroke="#2a6fd0" stroke-width="1.3"/></svg>
<div class="r" style="left:911px;top:49px;width:50px;height:20px;background:#fff;border:1px solid #abadb3;box-sizing:border-box"></div>
<div class="t " style="left:914px;top:53.69px;font-size:11px;color:#000;font-weight:normal;font-style:normal;">1.00us</div>
<div class="r" style="left:955px;top:49px;width:16px;height:20px;background:linear-gradient(#f4f4f4,#dcdcdc);border:1px solid #707070;box-sizing:border-box;border-radius:2px"></div>
<svg class="r" style="left:959px;top:57px;" width="8" height="4" viewBox="0 0 8 4"><path d="M0 0 H7 L3.5 4Z" fill="#000"/></svg>
<svg class="r" style="left:975px;top:51px;" width="16" height="15" viewBox="0 0 16 15"><path d="M4.5 0.5 C1.5 2.5 1 7.5 6 10" fill="none" stroke="#1e62c0" stroke-width="2.4"/><path d="M5 6.5 L10 10.5 L4.5 13.5Z" fill="#1e62c0"/><path d="M9 6.5 H15 M10 9 H15 M11 11.5 H15 M10 14 H15" stroke="#2a6fd0" stroke-width="1.2"/></svg>
<svg class="r" style="left:1001px;top:53px;" width="8" height="12" viewBox="0 0 8 12"><rect x="0" y="0" width="2.6" height="12" fill="#b0b0b0"/><rect x="5" y="0" width="2.6" height="12" fill="#b0b0b0"/></svg>
<div class="r" style="left:1024px;top:48px;width:75px;height:21px;background:linear-gradient(#f2f2f2,#ebebeb 50%,#dddddd 51%,#cfcfcf);border:1px solid #707070;border-radius:3px;box-sizing:border-box"></div>
<svg class="r" style="left:1028px;top:51px;" width="16" height="15" viewBox="0 0 16 15"><rect x="1" y="1.5" width="13" height="10" rx="3" fill="#bfe0fa" stroke="#3a8fd8" stroke-width="1.6"/><path d="M7 9 L11 14 L11 8Z" fill="#3a8fd8"/></svg>
<div class="t " style="left:1045px;top:53.69px;font-size:11px;color:#000;font-weight:normal;font-style:normal;">Re-launch</div>
<div class="r" style="left:1px;top:75px;width:141px;height:18px;background:linear-gradient(#f7f7f7,#ececec);border:1px solid #a9a9a9;box-sizing:border-box"></div>
<div class="t " style="left:5px;top:78.69px;font-size:11px;color:#000;font-weight:normal;font-style:normal;">Instances an...</div>
<svg class="r" style="left:84px;top:79px;" width="11" height="9" viewBox="0 0 11 9"><path d="M0.5 4.5 H10.5" stroke="#000" stroke-width="1.2"/><path d="M0 4.5 L3 1.5 V7.5Z M11 4.5 L8 1.5 V7.5Z" fill="#000"/></svg>
<svg class="r" style="left:98px;top:79px;" width="10" height="10" viewBox="0 0 10 10"><rect x="0.75" y="0.75" width="8.5" height="8.5" fill="none" stroke="#000" stroke-width="1.5"/><rect x="0.5" y="0.5" width="9" height="2" fill="#000"/></svg>
<svg class="r" style="left:114px;top:79px;" width="9" height="9" viewBox="0 0 9 9"><rect x="3" y="0.75" width="5.25" height="4.5" fill="none" stroke="#000" stroke-width="1.5"/><rect x="0.75" y="3.5" width="5.25" height="4.75" fill="#f0f0f0" stroke="#000" stroke-width="1.5"/><rect x="0.5" y="3.2" width="6" height="1.8" fill="#000"/><rect x="3" y="0.5" width="5.5" height="1.8" fill="#000"/></svg>
<svg class="r" style="left:129px;top:79px;" width="9" height="9" viewBox="0 0 9 9"><path d="M1 1 L8 8 M8 1 L1 8" stroke="#000" stroke-width="1.6"/></svg>
<div class="r" style="left:1px;top:95px;width:141px;height:26px;background:#f0f0f0;border:1px solid #a0a0a0;border-top-color:#fff;border-left-color:#fff;box-sizing:border-box"></div>
<div class="r" style="left:2px;top:98px;width:22px;height:20px;background:linear-gradient(#f0f0f0,#dcdcdc);border:1px solid #6e6e6e;border-radius:3px;box-sizing:border-box"></div>
<div class="r" style="left:26px;top:98px;width:22px;height:20px;background:linear-gradient(#f0f0f0,#dcdcdc);border:1px solid #6e6e6e;border-radius:3px;box-sizing:border-box"></div>
<div class="r" style="left:49px;top:98px;width:22px;height:20px;background:linear-gradient(#f0f0f0,#dcdcdc);border:1px solid #6e6e6e;border-radius:3px;box-sizing:border-box"></div>
<div class="r" style="left:72px;top:98px;width:22px;height:20px;background:linear-gradient(#f0f0f0,#dcdcdc);border:1px solid #6e6e6e;border-radius:3px;box-sizing:border-box"></div>
<div class="r" style="left:95px;top:98px;width:22px;height:20px;background:linear-gradient(#f0f0f0,#dcdcdc);border:1px solid #6e6e6e;border-radius:3px;box-sizing:border-box"></div>
<svg class="r" style="left:7px;top:101px;" width="14" height="15" viewBox="0 0 14 15"><path d="M0 3.5H3M0 6.5H3M0 9.5H3M0 12.5H3M11 3.5H14M11 6.5H14M11 9.5H14M11 12.5H14" stroke="#3a70c8" stroke-width="1"/><rect x="2.5" y="0.5" width="9" height="14" rx="1" fill="url(#gbluechip)" stroke="#2d62b8"/></svg>
<svg class="r" style="left:29px;top:100px;" width="17" height="16" viewBox="0 0 17 16"><path d="M8.5 1 L16 4.5 V11.5 L8.5 15 L1 11.5 V4.5Z" fill="#b9d8f3" stroke="#3b7fc6"/><path d="M1 4.5 L8.5 8 L16 4.5 M8.5 8 V15" fill="none" stroke="#3b7fc6"/></svg>
<svg class="r" style="left:53px;top:101px;" width="15" height="14" viewBox="0 0 15 14"><rect x="0.5" y="0.5" width="14" height="13" fill="#fff" stroke="#2e7bd6"/><path d="M3 3.5H12M5 6H12M5 8.5H12M3 11H12" stroke="#3a5a8a"/></svg>
<svg class="r" style="left:75px;top:100px;" width="17" height="16" viewBox="0 0 17 16"><path d="M10 3 C4 1 0.5 6 3 11 C5 14 9 14 10 13" fill="none" stroke="#5b8fd6" stroke-width="2.6"/><path d="M8 0 L13 3 L8 6Z" fill="#5b8fd6"/><rect x="9.5" y="9.5" width="6" height="6" fill="#eee" stroke="#555"/></svg>
<svg class="r" style="left:100px;top:101px;" width="14" height="15" viewBox="0 0 14 15"><path d="M0 3.5H3M0 6.5H3M0 9.5H3M0 12.5H3M11 3.5H14M11 6.5H14M11 9.5H14M11 12.5H14" stroke="#e06a1a" stroke-width="1"/><rect x="2.5" y="0.5" width="9" height="14" rx="1" fill="url(#gchip)" stroke="#c2530e"/></svg>
<svg class="r" style="left:131px;top:106px;" width="9" height="6" viewBox="0 0 9 6"><path d="M0.5 0.5 L3.5 3 L0.5 5.5 M4.5 0.5 L7.5 3 L4.5 5.5" fill="none" stroke="#000" stroke-width="1.6"/></svg>
<div class="r" style="left:1px;top:124px;width:141px;height:416px;background:#fff;border:1px solid #a9a9a9;border-right:none;box-sizing:border-box"></div>
<div class="r" style="left:141px;top:124px;width:1px;height:416px;background:#a9a9a9"></div>
<div class="r" style="left:2px;top:125px;width:139px;height:23px;background:linear-gradient(#ffffff,#f4f5f7 50%,#e9eaec)"></div>
<div class="r" style="left:2px;top:148px;width:139px;height:1px;background:#dcdcdc"></div>
<div class="r" style="left:2px;top:125px;width:139px;height:23px;overflow:hidden"><div class="r" style="left:-2px;top:-125px;width:1280px;height:800px">
<div class="t " style="left:12px;top:131.84px;font-size:12px;color:#000;font-weight:normal;font-style:normal;">Instance and Process Na</div>
</div></div>
<div class="r" style="left:2px;top:166px;width:139px;height:16px;background:#e8e8e8"></div>
<div class="r" style="left:2px;top:198px;width:139px;height:16px;background:#e8e8e8"></div>
<div class="r" style="left:62px;top:182px;width:79px;height:16px;background:#fdfdfd"></div>
<svg class="r" style="left:8px;top:154px;" width="10" height="10" viewBox="0 0 10 10"><path d="M0.5 0.5 H9.5 L5 9Z" fill="url(#gtri)" stroke="#9a9a9a"/></svg>
<svg class="r" style="left:26px;top:151px;" width="14" height="15" viewBox="0 0 14 15"><path d="M0 3.5H3M0 6.5H3M0 9.5H3M0 12.5H3M11 3.5H14M11 6.5H14M11 9.5H14M11 12.5H14" stroke="#e06a1a" stroke-width="1"/><rect x="2.5" y="0.5" width="9" height="14" rx="1" fill="url(#gchip)" stroke="#c2530e"/></svg>
<div class="t " style="left:47px;top:153.27px;font-size:11.5px;color:#000;font-weight:normal;font-style:normal;">test_adder</div>
<svg class="r" style="left:28px;top:170px;" width="10" height="10" viewBox="0 0 10 10"><path d="M0.5 0.5 H9.5 L5 9Z" fill="url(#gtri)" stroke="#9a9a9a"/></svg>
<svg class="r" style="left:46px;top:167px;" width="14" height="15" viewBox="0 0 14 15"><path d="M0 3.5H3M0 6.5H3M0 9.5H3M0 12.5H3M11 3.5H14M11 6.5H14M11 9.5H14M11 12.5H14" stroke="#e06a1a" stroke-width="1"/><rect x="2.5" y="0.5" width="9" height="14" rx="1" fill="url(#gchip)" stroke="#c2530e"/></svg>
<div class="t " style="left:67px;top:169.27px;font-size:11.5px;color:#000;font-weight:normal;font-style:normal;">uut</div>
<svg class="r" style="left:65px;top:182px;" width="17" height="16" viewBox="0 0 17 16"><path d="M10 3.5 C4 1.5 1 6 3 11 C5 14 9 14 10.5 13" fill="none" stroke="#6d7e99" stroke-width="2.4"/><path d="M8 0.5 L13 3.5 L8 6.5Z" fill="#6d7e99"/><rect x="9.5" y="9.5" width="6.5" height="6.5" fill="#6fa8e8" stroke="#2d62b8"/></svg>
<div class="r" style="left:2px;top:182px;width:139px;height:16px;overflow:hidden"><div class="r" style="left:-2px;top:-182px;width:1280px;height:800px">
<div class="t " style="left:87px;top:185.27px;font-size:11.5px;color:#000;font-weight:bold;font-style:normal;letter-spacing:-0.4px">Always_32</div>
</div></div>
<svg class="r" style="left:45px;top:198px;" width="17" height="16" viewBox="0 0 17 16"><path d="M10 3.5 C4 1.5 1 6 3 11 C5 14 9 14 10.5 13" fill="none" stroke="#e0732a" stroke-width="2.4"/><path d="M8 0.5 L13 3.5 L8 6.5Z" fill="#e0732a"/><rect x="9.5" y="9.5" width="6.5" height="6.5" fill="#ddd" stroke="#555"/></svg>
<div class="t " style="left:67px;top:201.27px;font-size:11.5px;color:#000;font-weight:normal;font-style:normal;">Initial_45_0</div>
<svg class="r" style="left:8px;top:217px;" width="9" height="11" viewBox="0 0 9 11"><path d="M0.5 0.5 V10 L8 5.25Z" fill="url(#gtri)" stroke="#9a9a9a"/></svg>
<svg class="r" style="left:26px;top:215px;" width="14" height="15" viewBox="0 0 14 15"><path d="M0 3.5H3M0 6.5H3M0 9.5H3M0 12.5H3M11 3.5H14M11 6.5H14M11 9.5H14M11 12.5H14" stroke="#e06a1a" stroke-width="1"/><rect x="2.5" y="0.5" width="9" height="14" rx="1" fill="url(#gchip)" stroke="#c2530e"/></svg>
<div class="t " style="left:47px;top:217.27px;font-size:11.5px;color:#000;font-weight:normal;font-style:normal;">glbl</div>
<div class="r" style="left:2px;top:522px;width:139px;height:16px;background:linear-gradient(#ededed,#f3f3f3)"></div>
<svg class="r" style="left:8px;top:526px;" width="5" height="8" viewBox="0 0 5 8"><path d="M4.5 0.5 L0.5 4 L4.5 7.5Z" fill="#555"/></svg>
<svg class="r" style="left:130px;top:526px;" width="5" height="8" viewBox="0 0 5 8"><path d="M0.5 0.5 L4.5 4 L0.5 7.5Z" fill="#555"/></svg>
<div class="r" style="left:20px;top:523px;width:35px;height:14px;background:linear-gradient(#f4f4f4,#e4e4e4 50%,#d6d6d6 51%,#cfcfcf);border:1px solid #9a9a9a;border-radius:2px;box-sizing:border-box"></div>
<svg class="r" style="left:33px;top:526px;" width="8" height="8" viewBox="0 0 8 8"><path d="M1.5 0 V7 M3.5 0 V7 M5.5 0 V7" stroke="#555" stroke-width="1"/></svg>
<div class="r" style="left:1px;top:539px;width:141px;height:25px;background:#f0f0f0"></div>
<div class="r" style="left:1px;top:538px;width:141px;height:1px;background:#a9a9a9"></div>
<div class="r" style="left:75px;top:541px;width:50px;height:22px;background:linear-gradient(#f4f4f4,#e4e4e4);border:1px solid #b5b5b5;box-sizing:border-box"></div>
<div class="r" style="left:1px;top:540px;width:74px;height:24px;background:#fff;border:1px solid #a9a9a9;border-top:none;box-sizing:border-box"></div>
<svg class="r" style="left:7px;top:543px;" width="16" height="16" viewBox="0 0 16 16"><rect x="5.5" y="0.5" width="5" height="4" fill="#6aa0e6" stroke="#2d62b8"/><rect x="0.5" y="10.5" width="5" height="4" fill="#6aa0e6" stroke="#2d62b8"/><rect x="10.5" y="10.5" width="5" height="4" fill="#6aa0e6" stroke="#2d62b8"/><path d="M8 4.5 V8 M3 10.5 V8 H13 V10.5" fill="none" stroke="#2d62b8"/></svg>
<div class="t " style="left:25px;top:546.27px;font-size:11.5px;color:#000;font-weight:normal;font-style:normal;">Instanc...</div>
<svg class="r" style="left:79px;top:543px;" width="16" height="16" viewBox="0 0 16 16"><rect x="0.5" y="0.5" width="10" height="13" fill="#fff" stroke="#2e7bd6"/><path d="M2.5 3H8M2.5 5.5H8M2.5 8H6" stroke="#2e7bd6"/><rect x="6" y="7.5" width="9.5" height="8" fill="#fff" stroke="#1e5fb8"/><path d="M6 10H15.5M6 12.8H15.5M9.5 7.5V15.5M12.5 7.5V15.5" stroke="#1e5fb8"/></svg>
<div class="t " style="left:105px;top:545.84px;font-size:12px;color:#000;font-weight:normal;font-style:normal;">M</div>
<div class="r" style="left:112px;top:542px;width:13px;height:21px;background:linear-gradient(#fafafa,#eaeaea);border:1px solid #c8c8c8;border-radius:2px;box-sizing:border-box"></div>
<svg class="r" style="left:115px;top:548px;" width="6" height="9" viewBox="0 0 6 9"><path d="M5 0.5 L0.5 4.5 L5 8.5Z" fill="#a8a8a8"/></svg>
<div class="r" style="left:128px;top:542px;width:13px;height:21px;background:linear-gradient(#f2f2f2,#dadada);border:1px solid #555;border-radius:2px;box-sizing:border-box"></div>
<svg class="r" style="left:131px;top:548px;" width="6" height="9" viewBox="0 0 6 9"><path d="M0.5 0.5 L5.5 4.5 L0.5 8.5Z" fill="#000"/></svg>
<div class="r" style="left:143px;top:216px;width:1px;height:2px;background:#c0c0c0"></div>
<div class="r" style="left:143px;top:219px;width:1px;height:2px;background:#c0c0c0"></div>
<div class="r" style="left:143px;top:222px;width:1px;height:2px;background:#c0c0c0"></div>
<div class="r" style="left:143px;top:225px;width:1px;height:2px;background:#c0c0c0"></div>
<div class="r" style="left:143px;top:228px;width:1px;height:2px;background:#c0c0c0"></div>
<div class="r" style="left:143px;top:231px;width:1px;height:2px;background:#c0c0c0"></div>
<div class="r" style="left:143px;top:234px;width:1px;height:2px;background:#c0c0c0"></div>
<div class="r" style="left:143px;top:237px;width:1px;height:2px;background:#c0c0c0"></div>
<div class="r" style="left:143px;top:240px;width:1px;height:2px;background:#c0c0c0"></div>
<div class="r" style="left:143px;top:243px;width:1px;height:2px;background:#c0c0c0"></div>
<div class="r" style="left:143px;top:246px;width:1px;height:2px;background:#c0c0c0"></div>
<div class="r" style="left:143px;top:249px;width:1px;height:2px;background:#c0c0c0"></div>
<div class="r" style="left:143px;top:252px;width:1px;height:2px;background:#c0c0c0"></div>
<div class="r" style="left:143px;top:255px;width:1px;height:2px;background:#c0c0c0"></div>
<div class="r" style="left:143px;top:258px;width:1px;height:2px;background:#c0c0c0"></div>
<div class="r" style="left:143px;top:261px;width:1px;height:2px;background:#c0c0c0"></div>
<div class="r" style="left:143px;top:264px;width:1px;height:2px;background:#c0c0c0"></div>
<div class="r" style="left:143px;top:267px;width:1px;height:2px;background:#c0c0c0"></div>
<div class="r" style="left:143px;top:270px;width:1px;height:2px;background:#c0c0c0"></div>
<div class="r" style="left:143px;top:273px;width:1px;height:2px;background:#c0c0c0"></div>
<div class="r" style="left:143px;top:276px;width:1px;height:2px;background:#c0c0c0"></div>
<div class="r" style="left:143px;top:279px;width:1px;height:2px;background:#c0c0c0"></div>
<div class="r" style="left:143px;top:282px;width:1px;height:2px;background:#c0c0c0"></div>
<div class="r" style="left:143px;top:285px;width:1px;height:2px;background:#c0c0c0"></div>
<div class="r" style="left:143px;top:288px;width:1px;height:2px;background:#c0c0c0"></div>
<div class="r" style="left:143px;top:291px;width:1px;height:2px;background:#c0c0c0"></div>
<div class="r" style="left:143px;top:294px;width:1px;height:2px;background:#c0c0c0"></div>
<div class="r" style="left:143px;top:297px;width:1px;height:2px;background:#c0c0c0"></div>
<div class="r" style="left:143px;top:300px;width:1px;height:2px;background:#c0c0c0"></div>
<div class="r" style="left:143px;top:303px;width:1px;height:2px;background:#c0c0c0"></div>
<div class="r" style="left:143px;top:306px;width:1px;height:2px;background:#c0c0c0"></div>
<div class="r" style="left:143px;top:309px;width:1px;height:2px;background:#c0c0c0"></div>
<div class="r" style="left:143px;top:312px;width:1px;height:2px;background:#c0c0c0"></div>
<div class="r" style="left:143px;top:315px;width:1px;height:2px;background:#c0c0c0"></div>
<div class="r" style="left:143px;top:318px;width:1px;height:2px;background:#c0c0c0"></div>
<div class="r" style="left:143px;top:321px;width:1px;height:2px;background:#c0c0c0"></div>
<div class="r" style="left:143px;top:324px;width:1px;height:2px;background:#c0c0c0"></div>
<div class="r" style="left:143px;top:327px;width:1px;height:2px;background:#c0c0c0"></div>
<div class="r" style="left:143px;top:330px;width:1px;height:2px;background:#c0c0c0"></div>
<div class="r" style="left:143px;top:333px;width:1px;height:2px;background:#c0c0c0"></div>
<div class="r" style="left:143px;top:336px;width:1px;height:2px;background:#c0c0c0"></div>
<div class="r" style="left:143px;top:339px;width:1px;height:2px;background:#c0c0c0"></div>
<div class="r" style="left:146px;top:75px;width:328px;height:18px;background:linear-gradient(#f7f7f7,#ececec);border:1px solid #a9a9a9;box-sizing:border-box"></div>
<div class="t " style="left:150px;top:78.69px;font-size:11px;color:#000;font-weight:normal;font-style:normal;">Objects</div>
<svg class="r" style="left:416px;top:79px;" width="11" height="9" viewBox="0 0 11 9"><path d="M0.5 4.5 H10.5" stroke="#000" stroke-width="1.2"/><path d="M0 4.5 L3 1.5 V7.5Z M11 4.5 L8 1.5 V7.5Z" fill="#000"/></svg>
<svg class="r" style="left:430px;top:79px;" width="10" height="10" viewBox="0 0 10 10"><rect x="0.75" y="0.75" width="8.5" height="8.5" fill="none" stroke="#000" stroke-width="1.5"/><rect x="0.5" y="0.5" width="9" height="2" fill="#000"/></svg>
<svg class="r" style="left:446px;top:79px;" width="9" height="9" viewBox="0 0 9 9"><rect x="3" y="0.75" width="5.25" height="4.5" fill="none" stroke="#000" stroke-width="1.5"/><rect x="0.75" y="3.5" width="5.25" height="4.75" fill="#f0f0f0" stroke="#000" stroke-width="1.5"/><rect x="0.5" y="3.2" width="6" height="1.8" fill="#000"/><rect x="3" y="0.5" width="5.5" height="1.8" fill="#000"/></svg>
<svg class="r" style="left:461px;top:79px;" width="9" height="9" viewBox="0 0 9 9"><path d="M1 1 L8 8 M8 1 L1 8" stroke="#000" stroke-width="1.6"/></svg>
<div class="t " style="left:151px;top:96.69px;font-size:11px;color:#000;font-weight:normal;font-style:normal;">Simulation Objects for Always_32_0</div>
<div class="r" style="left:146px;top:112px;width:328px;height:26px;background:#f0f0f0;border:1px solid #a0a0a0;border-top-color:#fff;border-left-color:#fff;box-sizing:border-box"></div>
<div class="r" style="left:148px;top:115px;width:23px;height:20px;background:linear-gradient(#f0f0f0,#dcdcdc);border:1px solid #6e6e6e;border-radius:3px;box-sizing:border-box"></div>
<div class="r" style="left:171px;top:115px;width:23px;height:20px;background:linear-gradient(#f0f0f0,#dcdcdc);border:1px solid #6e6e6e;border-radius:3px;box-sizing:border-box"></div>
<div class="r" style="left:194px;top:115px;width:23px;height:20px;background:linear-gradient(#f0f0f0,#dcdcdc);border:1px solid #6e6e6e;border-radius:3px;box-sizing:border-box"></div>
<div class="r" style="left:217px;top:115px;width:23px;height:20px;background:linear-gradient(#f0f0f0,#dcdcdc);border:1px solid #6e6e6e;border-radius:3px;box-sizing:border-box"></div>
<div class="r" style="left:240px;top:115px;width:23px;height:20px;background:linear-gradient(#f0f0f0,#dcdcdc);border:1px solid #6e6e6e;border-radius:3px;box-sizing:border-box"></div>
<div class="r" style="left:263px;top:115px;width:23px;height:20px;background:linear-gradient(#f0f0f0,#dcdcdc);border:1px solid #6e6e6e;border-radius:3px;box-sizing:border-box"></div>
<svg class="r" style="left:152px;top:117px;" width="17" height="16" viewBox="0 0 17 16"><path d="M0.5 1.5 H3.5 V10.5 H7.5 V1.5 H11.5 V8" fill="none" stroke="#5aa02c" stroke-width="1"/><rect x="7.5" y="7.5" width="8" height="8" fill="#f3c22c" stroke="#a68000" stroke-width="0.8"/><text x="11.5" y="14.2" font-size="7" text-anchor="middle" font-family="Liberation Mono" font-weight="bold" fill="#222">I</text></svg>
<svg class="r" style="left:175px;top:117px;" width="17" height="16" viewBox="0 0 17 16"><path d="M0.5 1.5 H3.5 V10.5 H7.5 V1.5 H11.5 V8" fill="none" stroke="#5aa02c" stroke-width="1"/><rect x="7.5" y="7.5" width="8" height="8" fill="#5fc24a" stroke="#2f8a22" stroke-width="0.8"/><text x="11.5" y="14.2" font-size="7" text-anchor="middle" font-family="Liberation Mono" font-weight="bold" fill="#222">O</text></svg>
<svg class="r" style="left:198px;top:117px;" width="17" height="16" viewBox="0 0 17 16"><path d="M0.5 1.5 H3.5 V10.5 H7.5 V1.5 H11.5 V8" fill="none" stroke="#5aa02c" stroke-width="1"/><rect x="2.5" y="9.5" width="14" height="6" fill="#4aa3e8" stroke="#1e6bb8" stroke-width="0.8"/><text x="9.5" y="14.8" font-size="6" text-anchor="middle" font-family="Liberation Mono" font-weight="bold" fill="#123">I/O</text></svg>
<svg class="r" style="left:221px;top:117px;" width="17" height="16" viewBox="0 0 17 16"><path d="M0.5 1.5 H3.5 V10.5 H7.5 V1.5 H11.5 V8" fill="none" stroke="#5aa02c" stroke-width="1"/><circle cx="11.5" cy="11.5" r="4.2" fill="#555" stroke="#222" stroke-width="0.8"/></svg>
<svg class="r" style="left:221px;top:117px;" width="17" height="16" viewBox="0 0 17 16"><path d="M10.5 12 H13.5 M12 10.5 V13.5" stroke="#fff" stroke-width="1.2"/></svg>
<svg class="r" style="left:244px;top:117px;" width="17" height="16" viewBox="0 0 17 16"><path d="M0.5 1.5 H3.5 V10.5 H7.5 V1.5 H11.5 V8" fill="none" stroke="#5aa02c" stroke-width="1"/><circle cx="11.5" cy="11.5" r="4.2" fill="#2a4fb0" stroke="#142a70" stroke-width="0.8"/></svg>
<svg class="r" style="left:244px;top:117px;" width="17" height="16" viewBox="0 0 17 16"><path d="M13.5 10.5 A2 2 0 1 0 13.5 13.5" fill="none" stroke="#fff" stroke-width="1.2"/></svg>
<svg class="r" style="left:267px;top:117px;" width="17" height="16" viewBox="0 0 17 16"><path d="M0.5 1.5 H3.5 V10.5 H7.5 V1.5 H11.5 V8" fill="none" stroke="#5aa02c" stroke-width="1"/><circle cx="11.5" cy="11.5" r="4.2" fill="#f3c22c" stroke="#a68000" stroke-width="0.8"/><text x="11.5" y="14" font-size="6.5" text-anchor="middle" font-family="Liberation Sans" fill="#6a4a00">U</text></svg>
<div class="r" style="left:288px;top:117px;width:1px;height:18px;background:#a0a0a0"></div>
<svg class="r" style="left:295px;top:117px;" width="17" height="17" viewBox="0 0 17 17"><circle cx="3" cy="3" r="2.5" fill="#f0b020"/><circle cx="14" cy="3" r="2.5" fill="#f0b020"/><circle cx="8.5" cy="8" r="6.5" fill="#bfe0fb" stroke="#4a9ad8" stroke-width="1.3"/><path d="M8.5 4 V8 H11" stroke="#333" fill="none"/><rect x="2" y="11" width="13" height="5" rx="2" fill="#ddd" stroke="#777"/></svg>
<div class="r" style="left:146px;top:141px;width:328px;height:423px;background:#fff;border:1px solid #a9a9a9;box-sizing:border-box"></div>
<div class="r" style="left:147px;top:142px;width:326px;height:23px;background:linear-gradient(#ffffff,#f4f5f7 50%,#e9eaec)"></div>
<div class="r" style="left:147px;top:165px;width:326px;height:1px;background:#e0e0e0"></div>
<div class="r" style="left:275px;top:143px;width:1px;height:22px;background:#e3e3e3"></div>
<div class="r" style="left:403px;top:143px;width:1px;height:22px;background:#e3e3e3"></div>
<div class="t " style="left:158px;top:148.84px;font-size:12px;color:#000;font-weight:normal;font-style:normal;">Object Name</div>
<div class="t " style="left:283px;top:148.84px;font-size:12px;color:#000;font-weight:normal;font-style:normal;">Value</div>
<div class="t " style="left:411px;top:148.84px;font-size:12px;color:#000;font-weight:normal;font-style:normal;">Data Type</div>
<svg class="r" style="left:153px;top:170px;" width="9" height="11" viewBox="0 0 9 11"><path d="M0.5 0.5 V10 L8 5.25Z" fill="url(#gtri)" stroke="#9a9a9a"/></svg>
<svg class="r" style="left:171px;top:167px;" width="17" height="16" viewBox="0 0 17 16"><path d="M0 1.5 H5.5 L8 5.5 L10.5 1.5 H16 V10 H8 L6 12 H0Z" fill="url(#gbus)"/><path d="M0 1.5 H5.5 L8 5.5 L10.5 1.5 H16" fill="none" stroke="#5aa8ea" stroke-width="1"/><rect x="7.5" y="7.5" width="8" height="8" fill="#f3c22c" stroke="#a68000" stroke-width="0.8"/><text x="11.5" y="14.2" font-size="7" text-anchor="middle" font-family="Liberation Mono" font-weight="bold" fill="#222">I</text></svg>
<div class="t " style="left:193px;top:171.03px;font-size:10.6px;color:#000;font-weight:normal;font-style:italic;">a[7:0]</div>
<div class="t " style="left:280px;top:170.03px;font-size:10px;color:#000;font-weight:normal;font-style:italic;letter-spacing:1.45px">11111111</div>
<div class="t " style="left:407px;top:170.27px;font-size:11.5px;color:#000;font-weight:normal;font-style:italic;">Array</div>
<div class="r" style="left:148px;top:183px;width:324px;height:16px;background:#e8e8e8"></div>
<svg class="r" style="left:153px;top:186px;" width="9" height="11" viewBox="0 0 9 11"><path d="M0.5 0.5 V10 L8 5.25Z" fill="url(#gtri)" stroke="#9a9a9a"/></svg>
<svg class="r" style="left:171px;top:183px;" width="17" height="16" viewBox="0 0 17 16"><path d="M0 1.5 H5.5 L8 5.5 L10.5 1.5 H16 V10 H8 L6 12 H0Z" fill="url(#gbus)"/><path d="M0 1.5 H5.5 L8 5.5 L10.5 1.5 H16" fill="none" stroke="#5aa8ea" stroke-width="1"/><rect x="7.5" y="7.5" width="8" height="8" fill="#f3c22c" stroke="#a68000" stroke-width="0.8"/><text x="11.5" y="14.2" font-size="7" text-anchor="middle" font-family="Liberation Mono" font-weight="bold" fill="#222">I</text></svg>
<div class="t " style="left:193px;top:187.03px;font-size:10.6px;color:#000;font-weight:normal;font-style:italic;">b[7:0]</div>
<div class="t " style="left:280px;top:186.03px;font-size:10px;color:#000;font-weight:normal;font-style:italic;letter-spacing:1.45px">11111111</div>
<div class="t " style="left:407px;top:186.27px;font-size:11.5px;color:#000;font-weight:normal;font-style:italic;">Array</div>
<svg class="r" style="left:171px;top:199px;" width="17" height="16" viewBox="0 0 17 16"><path d="M0.5 1.5 H3.5 V10.5 H7.5 V1.5 H11.5 V8" fill="none" stroke="#5aa02c" stroke-width="1"/><rect x="7.5" y="7.5" width="8" height="8" fill="#f3c22c" stroke="#a68000" stroke-width="0.8"/><text x="11.5" y="14.2" font-size="7" text-anchor="middle" font-family="Liberation Mono" font-weight="bold" fill="#222">I</text></svg>
<div class="t " style="left:193px;top:203.03px;font-size:10.6px;color:#000;font-weight:normal;font-style:italic;">c_in</div>
<div class="t " style="left:280px;top:202.03px;font-size:10px;color:#000;font-weight:normal;font-style:italic;letter-spacing:1.45px">1</div>
<div class="t " style="left:407px;top:202.27px;font-size:11.5px;color:#000;font-weight:normal;font-style:italic;">Logic</div>
<div class="r" style="left:148px;top:215px;width:324px;height:16px;background:#e8e8e8"></div>
<svg class="r" style="left:153px;top:218px;" width="9" height="11" viewBox="0 0 9 11"><path d="M0.5 0.5 V10 L8 5.25Z" fill="url(#gtri)" stroke="#9a9a9a"/></svg>
<svg class="r" style="left:171px;top:215px;" width="17" height="16" viewBox="0 0 17 16"><path d="M0 1.5 H5.5 L8 5.5 L10.5 1.5 H16 V10 H8 L6 12 H0Z" fill="url(#gbus)"/><path d="M0 1.5 H5.5 L8 5.5 L10.5 1.5 H16" fill="none" stroke="#5aa8ea" stroke-width="1"/><rect x="7.5" y="7.5" width="8" height="8" fill="#5fc24a" stroke="#2f8a22" stroke-width="0.8"/><text x="11.5" y="14.2" font-size="7" text-anchor="middle" font-family="Liberation Mono" font-weight="bold" fill="#222">O</text></svg>
<div class="t " style="left:193px;top:219.03px;font-size:10.6px;color:#000;font-weight:normal;font-style:italic;">sum[7:0]</div>
<div class="t " style="left:280px;top:218.03px;font-size:10px;color:#000;font-weight:normal;font-style:italic;letter-spacing:1.45px">11111111</div>
<div class="t " style="left:407px;top:218.27px;font-size:11.5px;color:#000;font-weight:normal;font-style:italic;">Array</div>
<svg class="r" style="left:171px;top:231px;" width="17" height="16" viewBox="0 0 17 16"><path d="M0.5 1.5 H3.5 V10.5 H7.5 V1.5 H11.5 V8" fill="none" stroke="#5aa02c" stroke-width="1"/><rect x="7.5" y="7.5" width="8" height="8" fill="#5fc24a" stroke="#2f8a22" stroke-width="0.8"/><text x="11.5" y="14.2" font-size="7" text-anchor="middle" font-family="Liberation Mono" font-weight="bold" fill="#222">O</text></svg>
<div class="t " style="left:193px;top:235.03px;font-size:10.6px;color:#000;font-weight:normal;font-style:italic;">c_out</div>
<div class="t " style="left:280px;top:234.03px;font-size:10px;color:#000;font-weight:normal;font-style:italic;letter-spacing:1.45px">1</div>
<div class="t " style="left:407px;top:234.27px;font-size:11.5px;color:#000;font-weight:normal;font-style:italic;">Logic</div>
<div class="r" style="left:148px;top:247px;width:324px;height:16px;background:#e8e8e8"></div>
<svg class="r" style="left:171px;top:247px;" width="17" height="16" viewBox="0 0 17 16"><path d="M0.5 1.5 H3.5 V10.5 H7.5 V1.5 H11.5 V8" fill="none" stroke="#5aa02c" stroke-width="1"/><circle cx="11.5" cy="11.5" r="4.2" fill="#f3c22c" stroke="#a68000" stroke-width="0.8"/><text x="11.5" y="14" font-size="6.5" text-anchor="middle" font-family="Liberation Sans" fill="#6a4a00">U</text></svg>
<div class="t " style="left:193px;top:251.03px;font-size:10.6px;color:#000;font-weight:normal;font-style:italic;">c</div>
<div class="t " style="left:280px;top:250.03px;font-size:10px;color:#000;font-weight:normal;font-style:italic;letter-spacing:1.45px">1</div>
<div class="t " style="left:407px;top:250.27px;font-size:11.5px;color:#000;font-weight:normal;font-style:italic;">Logic</div>
<svg class="r" style="left:153px;top:266px;" width="9" height="11" viewBox="0 0 9 11"><path d="M0.5 0.5 V10 L8 5.25Z" fill="url(#gtri)" stroke="#9a9a9a"/></svg>
<svg class="r" style="left:171px;top:263px;" width="17" height="16" viewBox="0 0 17 16"><path d="M0 1.5 H5.5 L8 5.5 L10.5 1.5 H16 V10 H8 L6 12 H0Z" fill="url(#gbus)"/><path d="M0 1.5 H5.5 L8 5.5 L10.5 1.5 H16" fill="none" stroke="#5aa8ea" stroke-width="1"/><circle cx="11.5" cy="11.5" r="4.2" fill="#f3c22c" stroke="#a68000" stroke-width="0.8"/><text x="11.5" y="14" font-size="6.5" text-anchor="middle" font-family="Liberation Sans" fill="#6a4a00">U</text></svg>
<div class="t " style="left:193px;top:267.03px;font-size:10.6px;color:#000;font-weight:normal;font-style:italic;">i[3:0]</div>
<div class="t " style="left:280px;top:266.04px;font-size:10px;color:#000;font-weight:normal;font-style:italic;letter-spacing:1.45px">1000</div>
<div class="t " style="left:407px;top:266.27px;font-size:11.5px;color:#000;font-weight:normal;font-style:italic;">Array</div>
<div class="r" style="left:147px;top:546px;width:325px;height:16px;background:linear-gradient(#ededed,#f3f3f3)"></div>
<svg class="r" style="left:153px;top:550px;" width="5" height="8" viewBox="0 0 5 8"><path d="M4.5 0.5 L0.5 4 L4.5 7.5Z" fill="#555"/></svg>
<svg class="r" style="left:461px;top:550px;" width="5" height="8" viewBox="0 0 5 8"><path d="M0.5 0.5 L4.5 4 L0.5 7.5Z" fill="#555"/></svg>
<div class="r" style="left:166px;top:547px;width:242px;height:14px;background:linear-gradient(#f4f4f4,#e4e4e4 50%,#d6d6d6 51%,#cfcfcf);border:1px solid #9a9a9a;border-radius:2px;box-sizing:border-box"></div>
<svg class="r" style="left:283px;top:550px;" width="8" height="8" viewBox="0 0 8 8"><path d="M1.5 0 V7 M3.5 0 V7 M5.5 0 V7" stroke="#555" stroke-width="1"/></svg>
<div class="r" style="left:476px;top:258px;width:1px;height:2px;background:#c0c0c0"></div>
<div class="r" style="left:476px;top:261px;width:1px;height:2px;background:#c0c0c0"></div>
<div class="r" style="left:476px;top:264px;width:1px;height:2px;background:#c0c0c0"></div>
<div class="r" style="left:476px;top:267px;width:1px;height:2px;background:#c0c0c0"></div>
<div class="r" style="left:476px;top:270px;width:1px;height:2px;background:#c0c0c0"></div>
<div class="r" style="left:476px;top:273px;width:1px;height:2px;background:#c0c0c0"></div>
<div class="r" style="left:476px;top:276px;width:1px;height:2px;background:#c0c0c0"></div>
<div class="r" style="left:476px;top:279px;width:1px;height:2px;background:#c0c0c0"></div>
<div class="r" style="left:476px;top:282px;width:1px;height:2px;background:#c0c0c0"></div>
<div class="r" style="left:476px;top:285px;width:1px;height:2px;background:#c0c0c0"></div>
<div class="r" style="left:476px;top:288px;width:1px;height:2px;background:#c0c0c0"></div>
<div class="r" style="left:476px;top:291px;width:1px;height:2px;background:#c0c0c0"></div>
<div class="r" style="left:476px;top:294px;width:1px;height:2px;background:#c0c0c0"></div>
<div class="r" style="left:476px;top:297px;width:1px;height:2px;background:#c0c0c0"></div>
<div class="r" style="left:476px;top:300px;width:1px;height:2px;background:#c0c0c0"></div>
<div class="r" style="left:476px;top:303px;width:1px;height:2px;background:#c0c0c0"></div>
<div class="r" style="left:476px;top:306px;width:1px;height:2px;background:#c0c0c0"></div>
<div class="r" style="left:476px;top:309px;width:1px;height:2px;background:#c0c0c0"></div>
<div class="r" style="left:476px;top:312px;width:1px;height:2px;background:#c0c0c0"></div>
<div class="r" style="left:476px;top:315px;width:1px;height:2px;background:#c0c0c0"></div>
<div class="r" style="left:476px;top:318px;width:1px;height:2px;background:#c0c0c0"></div>
<div class="r" style="left:476px;top:321px;width:1px;height:2px;background:#c0c0c0"></div>
<div class="r" style="left:476px;top:324px;width:1px;height:2px;background:#c0c0c0"></div>
<div class="r" style="left:476px;top:327px;width:1px;height:2px;background:#c0c0c0"></div>
<div class="r" style="left:476px;top:330px;width:1px;height:2px;background:#c0c0c0"></div>
<div class="r" style="left:476px;top:333px;width:1px;height:2px;background:#c0c0c0"></div>
<div class="r" style="left:476px;top:336px;width:1px;height:2px;background:#c0c0c0"></div>
<div class="r" style="left:476px;top:339px;width:1px;height:2px;background:#c0c0c0"></div>
<div class="r" style="left:476px;top:342px;width:1px;height:2px;background:#c0c0c0"></div>
<div class="r" style="left:476px;top:345px;width:1px;height:2px;background:#c0c0c0"></div>
<div class="r" style="left:476px;top:348px;width:1px;height:2px;background:#c0c0c0"></div>
<div class="r" style="left:476px;top:351px;width:1px;height:2px;background:#c0c0c0"></div>
<div class="r" style="left:476px;top:354px;width:1px;height:2px;background:#c0c0c0"></div>
<div class="r" style="left:476px;top:357px;width:1px;height:2px;background:#c0c0c0"></div>
<div class="r" style="left:476px;top:360px;width:1px;height:2px;background:#c0c0c0"></div>
<div class="r" style="left:476px;top:363px;width:1px;height:2px;background:#c0c0c0"></div>
<div class="r" style="left:476px;top:366px;width:1px;height:2px;background:#c0c0c0"></div>
<div class="r" style="left:476px;top:369px;width:1px;height:2px;background:#c0c0c0"></div>
<div class="r" style="left:476px;top:372px;width:1px;height:2px;background:#c0c0c0"></div>
<div class="r" style="left:476px;top:375px;width:1px;height:2px;background:#c0c0c0"></div>
<div class="r" style="left:476px;top:378px;width:1px;height:2px;background:#c0c0c0"></div>
<div class="r" style="left:476px;top:381px;width:1px;height:2px;background:#c0c0c0"></div>
<div class="r" style="left:476px;top:384px;width:1px;height:2px;background:#c0c0c0"></div>
<div class="r" style="left:476px;top:387px;width:1px;height:2px;background:#c0c0c0"></div>
<div class="r" style="left:476px;top:390px;width:1px;height:2px;background:#c0c0c0"></div>
<div class="r" style="left:478px;top:74px;width:26px;height:466px;background:#f0f0f0;border-left:1px solid #fff;box-sizing:border-box"></div>
<svg class="r" style="left:483px;top:79px;" width="16" height="16" viewBox="0 0 16 16"><path d="M1.5 14.5 L6 10" stroke="#e08a2a" stroke-width="3" stroke-linecap="round"/><circle cx="10" cy="6" r="5.2" fill="#dfe6ff" stroke="#6a7ae0" stroke-width="1.3"/><path d="M7 6 H13 M10 3 V9" stroke="#2a3aa8" stroke-width="1.8"/></svg>
<svg class="r" style="left:483px;top:101px;" width="16" height="16" viewBox="0 0 16 16"><path d="M1.5 14.5 L6 10" stroke="#e08a2a" stroke-width="3" stroke-linecap="round"/><circle cx="10" cy="6" r="5.2" fill="#dfe6ff" stroke="#6a7ae0" stroke-width="1.3"/><path d="M7 6 H13" stroke="#2a3aa8" stroke-width="1.8"/></svg>
<svg class="r" style="left:483px;top:123px;" width="16" height="16" viewBox="0 0 16 16"><path d="M1.5 14.5 L4 12" stroke="#e08a2a" stroke-width="3" stroke-linecap="round"/><circle cx="9" cy="7.5" r="6.2" fill="#fff" stroke="#3a4ad0" stroke-width="1.8"/><circle cx="9" cy="7.5" r="2.6" fill="#fff" stroke="#3a4ad0" stroke-width="1.4"/><path d="M4.5 3 L7 5.5 M13.5 3 L11 5.5 M4.5 12 L7 9.5 M13.5 12 L11 9.5" stroke="#3a4ad0" stroke-width="1.6"/></svg>
<svg class="r" style="left:483px;top:144px;" width="16" height="16" viewBox="0 0 16 16"><path d="M1.5 14.5 L6 10" stroke="#e08a2a" stroke-width="3" stroke-linecap="round"/><circle cx="10" cy="6" r="5.2" fill="#dfe6ff" stroke="#6a7ae0" stroke-width="1.3"/><rect x="6.5" y="3.5" width="8" height="4" fill="#e8102a"/></svg>
<div class="r" style="left:482px;top:165px;width:20px;height:1px;background:#a0a0a0"></div>
<svg class="r" style="left:483px;top:172px;" width="17" height="17" viewBox="0 0 17 17"><circle cx="8.5" cy="8.5" r="8" fill="url(#ggreen)" stroke="#3a9a2a" stroke-width="0.8"/><path d="M5 4.5 V12.5" stroke="#fff" stroke-width="1.4"/><path d="M6 8.5 H13 M6 8.5 L9.5 5 M6 8.5 L9.5 12" stroke="#fff" stroke-width="1.4" fill="none"/></svg>
<svg class="r" style="left:483px;top:194px;" width="17" height="17" viewBox="0 0 17 17"><circle cx="8.5" cy="8.5" r="8" fill="url(#ggreen)" stroke="#3a9a2a" stroke-width="0.8"/><path d="M12 4.5 V12.5" stroke="#fff" stroke-width="1.4"/><path d="M4 8.5 H11 M11 8.5 L7.5 5 M11 8.5 L7.5 12" stroke="#fff" stroke-width="1.4" fill="none"/></svg>
<svg class="r" style="left:483px;top:218px;" width="16" height="15" viewBox="0 0 16 15"><path d="M0 5.5 H3.5 V12.2 H15.5" fill="none" stroke="#3a3a3a" stroke-width="1.7"/><path d="M6.5 4 C10 2.2 14 2.5 14.5 7.5" fill="none" stroke="#2fa82f" stroke-width="2.8"/><path d="M3 4 L8 0 V8.5Z" fill="#2fa82f"/></svg>
<svg class="r" style="left:483px;top:238px;" width="16" height="15" viewBox="0 0 16 15"><path d="M0.5 12.2 H12.5 V5.5 H16" fill="none" stroke="#3a3a3a" stroke-width="1.7"/><path d="M9.5 4 C6 2.2 2 2.5 1.5 7.5" fill="none" stroke="#2fa82f" stroke-width="2.8"/><path d="M13 4 L8 0 V8.5Z" fill="#2fa82f"/></svg>
<div class="r" style="left:482px;top:259px;width:20px;height:1px;background:#a0a0a0"></div>
<svg class="r" style="left:488px;top:265px;" width="9" height="16" viewBox="0 0 9 16"><path d="M3 0 H6 V4 H8.5 L4.5 8 L0.5 4 H3Z" fill="#2fa02f"/><rect x="2.5" y="9" width="4" height="7" fill="#333"/></svg>
<svg class="r" style="left:484px;top:291px;" width="15" height="16" viewBox="0 0 15 16"><rect x="0.5" y="9" width="3" height="7" fill="#9a9a9a"/><path d="M4 8 C5 3.5 9 2.5 13.5 5.5" fill="none" stroke="#b0b0b0" stroke-width="2.4"/><path d="M1.5 5 L6.5 1 L6.5 9Z" fill="#b0b0b0"/></svg>
<svg class="r" style="left:484px;top:311px;" width="15" height="16" viewBox="0 0 15 16"><rect x="11.5" y="9" width="3" height="7" fill="#9a9a9a"/><path d="M11 8 C10 3.5 6 2.5 1.5 5.5" fill="none" stroke="#b0b0b0" stroke-width="2.4"/><path d="M13.5 5 L8.5 1 L8.5 9Z" fill="#b0b0b0"/></svg>
<div class="r" style="left:482px;top:331px;width:20px;height:1px;background:#a0a0a0"></div>
<svg class="r" style="left:483px;top:337px;" width="16" height="16" viewBox="0 0 16 16"><rect x="0.5" y="0.5" width="2.5" height="15" fill="#bdbdbd"/><rect x="13" y="0.5" width="2.5" height="15" fill="#bdbdbd"/><path d="M4 11 L12 5 M4 11 V8 M12 5 V8 M12 11 L4 5" stroke="#aaa" stroke-width="1.6" fill="none"/></svg>
<div class="r" style="left:481px;top:358px;width:22px;height:21px;background:linear-gradient(#e6e6e6,#cfcfcf);border:1px solid #6e6e6e;border-radius:3px;box-sizing:border-box"></div>
<svg class="r" style="left:484px;top:361px;" width="16" height="16" viewBox="0 0 16 16"><path d="M2 1 V12 H6 V1 H11 V12 H14" fill="none" stroke="#4aa02a" stroke-width="1.4"/><path d="M5 9 L5 16 L7 14.5 L8.5 17 L9.5 16.5 L8.5 14 L10.5 14Z" fill="#fff" stroke="#333" stroke-width="0.8"/></svg>
<svg class="r" style="left:483px;top:384px;" width="16" height="15" viewBox="0 0 16 15"><rect x="0.5" y="0.5" width="15" height="14" fill="#f4f4f4" stroke="#aaa"/><rect x="1" y="1" width="14" height="3" fill="#bbb"/><path d="M3 7 V10 M6 7 V10 M9 7 V10 M12 7 V10" stroke="#999"/></svg>
<div class="r" style="left:505px;top:73px;width:775px;height:467px;background:#f0f0f0"></div>
<div class="r" style="left:506px;top:74px;width:756px;height:448px;background:#000"></div>
<div class="r" style="left:617px;top:74px;width:4px;height:449px;background:linear-gradient(90deg,#a0a0a0,#e8e8e8,#c8c8c8,#8a8a8a)"></div>
<div class="r" style="left:694px;top:74px;width:4px;height:449px;background:linear-gradient(90deg,#a0a0a0,#e8e8e8,#c8c8c8,#8a8a8a)"></div>
<div class="r" style="left:503px;top:74px;width:3px;height:449px;background:linear-gradient(90deg,#e0e0e0,#a8a8a8 50%,#8c8c8c)"></div>
<div class="r" style="left:506px;top:106px;width:111px;height:2px;background:#8a8a8a"></div>
<div class="r" style="left:621px;top:106px;width:73px;height:2px;background:#8a8a8a"></div>
<div class="r" style="left:506px;top:482px;width:111px;height:2px;background:#8a8a8a"></div>
<div class="r" style="left:621px;top:482px;width:73px;height:2px;background:#8a8a8a"></div>
<div class="r" style="left:507px;top:108px;width:110px;height:23px;background:linear-gradient(#ffffff,#f5f5f5 50%,#e8e8e8)"></div>
<div class="r" style="left:622px;top:108px;width:72px;height:23px;background:linear-gradient(#ffffff,#f5f5f5 50%,#e8e8e8)"></div>
<div class="t " style="left:513px;top:113.84px;font-size:12px;color:#000;font-weight:bold;font-style:normal;">Name</div>
<div class="t " style="left:630px;top:113.84px;font-size:12px;color:#000;font-weight:bold;font-style:normal;">Value</div>
<svg class="r" style="left:512px;top:137px;" width="11" height="9" viewBox="0 0 11 9"><path d="M0.5 0.5 H10.5 L5.5 8.5Z" fill="url(#gtri2)"/></svg>
<svg class="r" style="left:530px;top:133px;" width="17" height="16" viewBox="0 0 17 16"><path d="M0 22 H6.5 L8.5 26 L10.5 22 H16 V31 H0Z" transform="translate(0,-20)" fill="url(#gbus2)"/><circle cx="12" cy="11.5" r="5.2" fill="#000" opacity="0.6"/><circle cx="12" cy="11.5" r="4.3" fill="url(#ggray)"/><path d="M10.2 11.5 H13.8 M12 9.7 V13.3" stroke="#111" stroke-width="1.3"/></svg>
<div class="t " style="left:552px;top:135.69px;font-size:11px;color:#fff;font-weight:normal;font-style:normal;">sum[7:0]</div>
<div class="t " style="left:627px;top:136.53px;font-size:10px;color:#fff;font-weight:normal;font-style:normal;letter-spacing:2px">255</div>
<svg class="r" style="left:550px;top:153px;" width="17" height="16" viewBox="0 0 17 16"><path d="M0 0.5 H3.5 V11.5 H7.5 V0.5 H11.5 V7" fill="none" stroke="#6ab04a" stroke-width="1"/><circle cx="12" cy="11.5" r="5.2" fill="#000" opacity="0.6"/><circle cx="12" cy="11.5" r="4.3" fill="url(#ggray)"/><path d="M10.2 11.5 H13.8 M12 9.7 V13.3" stroke="#111" stroke-width="1.3"/></svg>
<div class="t " style="left:572px;top:155.69px;font-size:11px;color:#fff;font-weight:normal;font-style:normal;">[7]</div>
<div class="t " style="left:627px;top:156.53px;font-size:10px;color:#fff;font-weight:normal;font-style:normal;letter-spacing:2px">1</div>
<svg class="r" style="left:550px;top:173px;" width="17" height="16" viewBox="0 0 17 16"><path d="M0 0.5 H3.5 V11.5 H7.5 V0.5 H11.5 V7" fill="none" stroke="#6ab04a" stroke-width="1"/><circle cx="12" cy="11.5" r="5.2" fill="#000" opacity="0.6"/><circle cx="12" cy="11.5" r="4.3" fill="url(#ggray)"/><path d="M10.2 11.5 H13.8 M12 9.7 V13.3" stroke="#111" stroke-width="1.3"/></svg>
<div class="t " style="left:572px;top:175.69px;font-size:11px;color:#fff;font-weight:normal;font-style:normal;">[6]</div>
<div class="t " style="left:627px;top:176.53px;font-size:10px;color:#fff;font-weight:normal;font-style:normal;letter-spacing:2px">1</div>
<svg class="r" style="left:550px;top:193px;" width="17" height="16" viewBox="0 0 17 16"><path d="M0 0.5 H3.5 V11.5 H7.5 V0.5 H11.5 V7" fill="none" stroke="#6ab04a" stroke-width="1"/><circle cx="12" cy="11.5" r="5.2" fill="#000" opacity="0.6"/><circle cx="12" cy="11.5" r="4.3" fill="url(#ggray)"/><path d="M10.2 11.5 H13.8 M12 9.7 V13.3" stroke="#111" stroke-width="1.3"/></svg>
<div class="t " style="left:572px;top:195.69px;font-size:11px;color:#fff;font-weight:normal;font-style:normal;">[5]</div>
<div class="t " style="left:627px;top:196.53px;font-size:10px;color:#fff;font-weight:normal;font-style:normal;letter-spacing:2px">1</div>
<svg class="r" style="left:550px;top:213px;" width="17" height="16" viewBox="0 0 17 16"><path d="M0 0.5 H3.5 V11.5 H7.5 V0.5 H11.5 V7" fill="none" stroke="#6ab04a" stroke-width="1"/><circle cx="12" cy="11.5" r="5.2" fill="#000" opacity="0.6"/><circle cx="12" cy="11.5" r="4.3" fill="url(#ggray)"/><path d="M10.2 11.5 H13.8 M12 9.7 V13.3" stroke="#111" stroke-width="1.3"/></svg>
<div class="t " style="left:572px;top:215.69px;font-size:11px;color:#fff;font-weight:normal;font-style:normal;">[4]</div>
<div class="t " style="left:627px;top:216.53px;font-size:10px;color:#fff;font-weight:normal;font-style:normal;letter-spacing:2px">1</div>
<svg class="r" style="left:550px;top:233px;" width="17" height="16" viewBox="0 0 17 16"><path d="M0 0.5 H3.5 V11.5 H7.5 V0.5 H11.5 V7" fill="none" stroke="#6ab04a" stroke-width="1"/><circle cx="12" cy="11.5" r="5.2" fill="#000" opacity="0.6"/><circle cx="12" cy="11.5" r="4.3" fill="url(#ggray)"/><path d="M10.2 11.5 H13.8 M12 9.7 V13.3" stroke="#111" stroke-width="1.3"/></svg>
<div class="t " style="left:572px;top:235.69px;font-size:11px;color:#fff;font-weight:normal;font-style:normal;">[3]</div>
<div class="t " style="left:627px;top:236.53px;font-size:10px;color:#fff;font-weight:normal;font-style:normal;letter-spacing:2px">1</div>
<svg class="r" style="left:550px;top:253px;" width="17" height="16" viewBox="0 0 17 16"><path d="M0 0.5 H3.5 V11.5 H7.5 V0.5 H11.5 V7" fill="none" stroke="#6ab04a" stroke-width="1"/><circle cx="12" cy="11.5" r="5.2" fill="#000" opacity="0.6"/><circle cx="12" cy="11.5" r="4.3" fill="url(#ggray)"/><path d="M10.2 11.5 H13.8 M12 9.7 V13.3" stroke="#111" stroke-width="1.3"/></svg>
<div class="t " style="left:572px;top:255.69px;font-size:11px;color:#fff;font-weight:normal;font-style:normal;">[2]</div>
<div class="t " style="left:627px;top:256.54px;font-size:10px;color:#fff;font-weight:normal;font-style:normal;letter-spacing:2px">1</div>
<svg class="r" style="left:550px;top:273px;" width="17" height="16" viewBox="0 0 17 16"><path d="M0 0.5 H3.5 V11.5 H7.5 V0.5 H11.5 V7" fill="none" stroke="#6ab04a" stroke-width="1"/><circle cx="12" cy="11.5" r="5.2" fill="#000" opacity="0.6"/><circle cx="12" cy="11.5" r="4.3" fill="url(#ggray)"/><path d="M10.2 11.5 H13.8 M12 9.7 V13.3" stroke="#111" stroke-width="1.3"/></svg>
<div class="t " style="left:572px;top:275.69px;font-size:11px;color:#fff;font-weight:normal;font-style:normal;">[1]</div>
<div class="t " style="left:627px;top:276.54px;font-size:10px;color:#fff;font-weight:normal;font-style:normal;letter-spacing:2px">1</div>
<svg class="r" style="left:550px;top:293px;" width="17" height="16" viewBox="0 0 17 16"><path d="M0 0.5 H3.5 V11.5 H7.5 V0.5 H11.5 V7" fill="none" stroke="#6ab04a" stroke-width="1"/><circle cx="12" cy="11.5" r="5.2" fill="#000" opacity="0.6"/><circle cx="12" cy="11.5" r="4.3" fill="url(#ggray)"/><path d="M10.2 11.5 H13.8 M12 9.7 V13.3" stroke="#111" stroke-width="1.3"/></svg>
<div class="t " style="left:572px;top:295.69px;font-size:11px;color:#fff;font-weight:normal;font-style:normal;">[0]</div>
<div class="t " style="left:627px;top:296.54px;font-size:10px;color:#fff;font-weight:normal;font-style:normal;letter-spacing:2px">1</div>
<svg class="r" style="left:530px;top:313px;" width="17" height="16" viewBox="0 0 17 16"><path d="M0 0.5 H3.5 V11.5 H7.5 V0.5 H11.5 V7" fill="none" stroke="#6ab04a" stroke-width="1"/><circle cx="12" cy="11.5" r="5.2" fill="#000" opacity="0.6"/><circle cx="12" cy="11.5" r="4.3" fill="url(#ggray)"/><path d="M10.2 11.5 H13.8 M12 9.7 V13.3" stroke="#111" stroke-width="1.3"/></svg>
<div class="t " style="left:552px;top:315.69px;font-size:11px;color:#fff;font-weight:normal;font-style:normal;">c_out</div>
<div class="t " style="left:627px;top:316.54px;font-size:10px;color:#fff;font-weight:normal;font-style:normal;letter-spacing:2px">1</div>
<svg class="r" style="left:512px;top:335px;" width="9" height="12" viewBox="0 0 9 12"><path d="M0.5 0.5 V11.5 L8.5 6Z" fill="url(#gtri2)"/></svg>
<svg class="r" style="left:530px;top:333px;" width="17" height="16" viewBox="0 0 17 16"><path d="M0 22 H6.5 L8.5 26 L10.5 22 H16 V31 H0Z" transform="translate(0,-20)" fill="url(#gbus2)"/><circle cx="12" cy="11.5" r="5.2" fill="#000" opacity="0.6"/><circle cx="12" cy="11.5" r="4.3" fill="url(#gyel)"/><path d="M10.5 9.5 L12 13.5 L13.5 9.5" fill="none" stroke="#6a4a00" stroke-width="0.9"/></svg>
<div class="t " style="left:552px;top:335.69px;font-size:11px;color:#fff;font-weight:normal;font-style:normal;">a[7:0]</div>
<div class="t " style="left:627px;top:336.54px;font-size:10px;color:#fff;font-weight:normal;font-style:normal;letter-spacing:2px">255</div>
<svg class="r" style="left:512px;top:355px;" width="9" height="12" viewBox="0 0 9 12"><path d="M0.5 0.5 V11.5 L8.5 6Z" fill="url(#gtri2)"/></svg>
<svg class="r" style="left:530px;top:353px;" width="17" height="16" viewBox="0 0 17 16"><path d="M0 22 H6.5 L8.5 26 L10.5 22 H16 V31 H0Z" transform="translate(0,-20)" fill="url(#gbus2)"/><circle cx="12" cy="11.5" r="5.2" fill="#000" opacity="0.6"/><circle cx="12" cy="11.5" r="4.3" fill="url(#gyel)"/><path d="M10.5 9.5 L12 13.5 L13.5 9.5" fill="none" stroke="#6a4a00" stroke-width="0.9"/></svg>
<div class="t " style="left:552px;top:355.69px;font-size:11px;color:#fff;font-weight:normal;font-style:normal;">b[7:0]</div>
<div class="t " style="left:627px;top:356.54px;font-size:10px;color:#fff;font-weight:normal;font-style:normal;letter-spacing:2px">255</div>
<svg class="r" style="left:530px;top:373px;" width="17" height="16" viewBox="0 0 17 16"><path d="M0 0.5 H3.5 V11.5 H7.5 V0.5 H11.5 V7" fill="none" stroke="#6ab04a" stroke-width="1"/><circle cx="12" cy="11.5" r="5.2" fill="#000" opacity="0.6"/><circle cx="12" cy="11.5" r="4.3" fill="url(#gyel)"/><path d="M10.5 9.5 L12 13.5 L13.5 9.5" fill="none" stroke="#6a4a00" stroke-width="0.9"/></svg>
<div class="t " style="left:552px;top:375.69px;font-size:11px;color:#fff;font-weight:normal;font-style:normal;">c_in</div>
<div class="t " style="left:627px;top:376.54px;font-size:10px;color:#fff;font-weight:normal;font-style:normal;letter-spacing:2px">1</div>
<svg class="r" style="left:0px;top:0px;" width="1280" height="800" viewBox="0 0 1280 800"><defs><clipPath id="wclip"><rect x="698" y="74" width="560" height="420"/></clipPath></defs><g clip-path="url(#wclip)"><rect x="812.5" y="154.5" width="467" height="14.0" fill="#004000"/><rect x="812.5" y="174.5" width="467" height="14.0" fill="#004000"/><rect x="756.5" y="194.5" width="523" height="14.0" fill="#004000"/><rect x="812.5" y="214.5" width="467" height="14.0" fill="#004000"/><rect x="812.5" y="234.5" width="467" height="14.0" fill="#004000"/><rect x="756.5" y="254.5" width="523" height="14.0" fill="#004000"/><rect x="756.5" y="274.5" width="523" height="14.0" fill="#004000"/><rect x="756.5" y="294.5" width="56" height="14.0" fill="#004000"/><rect x="868.5" y="294.5" width="411" height="14.0" fill="#004000"/><rect x="756.5" y="314.5" width="523" height="14.0" fill="#004000"/><rect x="868.5" y="374.5" width="411" height="14.0" fill="#004000"/><path d="M702 141.5 L705.5 134.5 L753.5 134.5 L757 141.5 L753.5 148.5 L705.5 148.5 Z" fill="none" stroke="#00ff00" stroke-width="1"/><path d="M757 141.5 L760.5 134.5 L808.5 134.5 L812 141.5 L808.5 148.5 L760.5 148.5 Z" fill="none" stroke="#00ff00" stroke-width="1"/><path d="M812 141.5 L815.5 134.5 L864.5 134.5 L868 141.5 L864.5 148.5 L815.5 148.5 Z" fill="none" stroke="#00ff00" stroke-width="1"/><path d="M868 141.5 L871.5 134.5 L1275.5 134.5 L1279 141.5 L1275.5 148.5 L871.5 148.5 Z" fill="none" stroke="#00ff00" stroke-width="1"/><path d="M702 168.5 L812 168.5 L812 154.5 L1279 154.5" fill="none" stroke="#00ff00" stroke-width="1"/><path d="M702 188.5 L812 188.5 L812 174.5 L1279 174.5" fill="none" stroke="#00ff00" stroke-width="1"/><path d="M702 208.5 L756 208.5 L756 194.5 L1279 194.5" fill="none" stroke="#00ff00" stroke-width="1"/><path d="M702 228.5 L812 228.5 L812 214.5 L1279 214.5" fill="none" stroke="#00ff00" stroke-width="1"/><path d="M702 248.5 L812 248.5 L812 234.5 L1279 234.5" fill="none" stroke="#00ff00" stroke-width="1"/><path d="M702 268.5 L756 268.5 L756 254.5 L1279 254.5" fill="none" stroke="#00ff00" stroke-width="1"/><path d="M702 288.5 L756 288.5 L756 274.5 L1279 274.5" fill="none" stroke="#00ff00" stroke-width="1"/><path d="M702 308.5 L756 308.5 L756 294.5 L812 294.5 L812 308.5 L868 308.5 L868 294.5 L1279 294.5" fill="none" stroke="#00ff00" stroke-width="1"/><path d="M702 328.5 L756 328.5 L756 314.5 L1279 314.5" fill="none" stroke="#00ff00" stroke-width="1"/><path d="M702 341.5 L705.5 334.5 L753.5 334.5 L757 341.5 L753.5 348.5 L705.5 348.5 Z" fill="none" stroke="#00ff00" stroke-width="1"/><path d="M757 341.5 L760.5 334.5 L808.5 334.5 L812 341.5 L808.5 348.5 L760.5 348.5 Z" fill="none" stroke="#00ff00" stroke-width="1"/><path d="M812 341.5 L815.5 334.5 L1275.5 334.5 L1279 341.5 L1275.5 348.5 L815.5 348.5 Z" fill="none" stroke="#00ff00" stroke-width="1"/><path d="M702 361.5 L705.5 354.5 L753.5 354.5 L757 361.5 L753.5 368.5 L705.5 368.5 Z" fill="none" stroke="#00ff00" stroke-width="1"/><path d="M757 361.5 L760.5 354.5 L808.5 354.5 L812 361.5 L808.5 368.5 L760.5 368.5 Z" fill="none" stroke="#00ff00" stroke-width="1"/><path d="M812 361.5 L815.5 354.5 L1275.5 354.5 L1279 361.5 L1275.5 368.5 L815.5 368.5 Z" fill="none" stroke="#00ff00" stroke-width="1"/><path d="M702 388.5 L868 388.5 L868 374.5 L1279 374.5" fill="none" stroke="#00ff00" stroke-width="1"/><path d="M701.5 130.5 H1258.5 M701.5 482.5 H1258.5" stroke="#e0e0e0" stroke-width="1"/><path d="M812.5 114 V482" stroke="#c8c8c8" stroke-width="1"/><path d="M924.5 114 V482" stroke="#c8c8c8" stroke-width="1"/><path d="M1035.5 114 V482" stroke="#c8c8c8" stroke-width="1"/><path d="M1147.5 114 V482" stroke="#c8c8c8" stroke-width="1"/><path d="M701.5 114 V482" stroke="#e8e8e8" stroke-width="1"/><path d="M712.5 126 V130" stroke="#fff" stroke-width="1"/><path d="M723.5 126 V130" stroke="#fff" stroke-width="1"/><path d="M734.5 126 V130" stroke="#fff" stroke-width="1"/><path d="M746.5 126 V130" stroke="#fff" stroke-width="1"/><path d="M757.5 122 V130" stroke="#fff" stroke-width="1"/><path d="M768.5 126 V130" stroke="#fff" stroke-width="1"/><path d="M779.5 126 V130" stroke="#fff" stroke-width="1"/><path d="M790.5 126 V130" stroke="#fff" stroke-width="1"/><path d="M801.5 126 V130" stroke="#fff" stroke-width="1"/><path d="M823.5 126 V130" stroke="#fff" stroke-width="1"/><path d="M835.5 126 V130" stroke="#fff" stroke-width="1"/><path d="M846.5 126 V130" stroke="#fff" stroke-width="1"/><path d="M857.5 126 V130" stroke="#fff" stroke-width="1"/><path d="M868.5 122 V130" stroke="#fff" stroke-width="1"/><path d="M879.5 126 V130" stroke="#fff" stroke-width="1"/><path d="M890.5 126 V130" stroke="#fff" stroke-width="1"/><path d="M901.5 126 V130" stroke="#fff" stroke-width="1"/><path d="M912.5 126 V130" stroke="#fff" stroke-width="1"/><path d="M935.5 126 V130" stroke="#fff" stroke-width="1"/><path d="M946.5 126 V130" stroke="#fff" stroke-width="1"/><path d="M957.5 126 V130" stroke="#fff" stroke-width="1"/><path d="M968.5 126 V130" stroke="#fff" stroke-width="1"/><path d="M979.5 122 V130" stroke="#fff" stroke-width="1"/><path d="M990.5 126 V130" stroke="#fff" stroke-width="1"/><path d="M1002.5 126 V130" stroke="#fff" stroke-width="1"/><path d="M1013.5 126 V130" stroke="#fff" stroke-width="1"/><path d="M1024.5 126 V130" stroke="#fff" stroke-width="1"/><path d="M1046.5 126 V130" stroke="#fff" stroke-width="1"/><path d="M1057.5 126 V130" stroke="#fff" stroke-width="1"/><path d="M1068.5 126 V130" stroke="#fff" stroke-width="1"/><path d="M1079.5 126 V130" stroke="#fff" stroke-width="1"/><path d="M1091.5 122 V130" stroke="#fff" stroke-width="1"/><path d="M1102.5 126 V130" stroke="#fff" stroke-width="1"/><path d="M1113.5 126 V130" stroke="#fff" stroke-width="1"/><path d="M1124.5 126 V130" stroke="#fff" stroke-width="1"/><path d="M1135.5 126 V130" stroke="#fff" stroke-width="1"/><path d="M1157.5 126 V130" stroke="#fff" stroke-width="1"/><path d="M1168.5 126 V130" stroke="#fff" stroke-width="1"/><path d="M1180.5 126 V130" stroke="#fff" stroke-width="1"/><path d="M1191.5 126 V130" stroke="#fff" stroke-width="1"/><path d="M1202.5 122 V130" stroke="#fff" stroke-width="1"/><path d="M1213.5 126 V130" stroke="#fff" stroke-width="1"/><path d="M1224.5 126 V130" stroke="#fff" stroke-width="1"/><path d="M1235.5 126 V130" stroke="#fff" stroke-width="1"/><path d="M1246.5 126 V130" stroke="#fff" stroke-width="1"/></g><path d="M1259 90 V482.5" stroke="#ffff00" stroke-width="2"/><rect x="1191.5" y="74.5" width="68" height="14" fill="#000" stroke="#ffff00" stroke-width="1"/></svg>
<div class="t" style="left:528px;width:400px;text-align:center;top:135.69px;font-size:11px;color:#fff;font-weight:normal;font-style:normal;">0</div>
<div class="t" style="left:585px;width:400px;text-align:center;top:135.69px;font-size:11px;color:#fff;font-weight:normal;font-style:normal;">39</div>
<div class="t" style="left:641px;width:400px;text-align:center;top:135.69px;font-size:11px;color:#fff;font-weight:normal;font-style:normal;">254</div>
<div class="t" style="left:864px;width:400px;text-align:center;top:135.69px;font-size:11px;color:#fff;font-weight:normal;font-style:normal;">255</div>
<div class="t" style="left:528px;width:400px;text-align:center;top:335.69px;font-size:11px;color:#fff;font-weight:normal;font-style:normal;">0</div>
<div class="t" style="left:585px;width:400px;text-align:center;top:335.69px;font-size:11px;color:#fff;font-weight:normal;font-style:normal;">40</div>
<div class="t" style="left:836px;width:400px;text-align:center;top:335.69px;font-size:11px;color:#fff;font-weight:normal;font-style:normal;">255</div>
<div class="t" style="left:528px;width:400px;text-align:center;top:355.69px;font-size:11px;color:#fff;font-weight:normal;font-style:normal;">0</div>
<div class="t" style="left:585px;width:400px;text-align:center;top:355.69px;font-size:11px;color:#fff;font-weight:normal;font-style:normal;">10</div>
<div class="t" style="left:836px;width:400px;text-align:center;top:355.69px;font-size:11px;color:#fff;font-weight:normal;font-style:normal;">255</div>
<div class="t " style="left:703px;top:112.69px;font-size:11px;color:#fff;font-weight:normal;font-style:normal;">0 ns</div>
<div class="t " style="left:814px;top:112.69px;font-size:11px;color:#fff;font-weight:normal;font-style:normal;">200 ns</div>
<div class="t " style="left:926px;top:112.69px;font-size:11px;color:#fff;font-weight:normal;font-style:normal;">400 ns</div>
<div class="t " style="left:1037px;top:112.69px;font-size:11px;color:#fff;font-weight:normal;font-style:normal;">600 ns</div>
<div class="t " style="left:1149px;top:112.69px;font-size:11px;color:#fff;font-weight:normal;font-style:normal;">800 ns</div>
<div class="t " style="left:1194px;top:76.69px;font-size:11px;color:#ffff00;font-weight:normal;font-style:normal;">1,000.000 ns</div>
<div class="t " style="left:706px;top:502.69px;font-size:11px;color:#fff;font-weight:normal;font-style:normal;">X1: 1,000.000 ns</div>
<div class="r" style="left:506px;top:523px;width:111px;height:16px;background:#ededed"></div>
<div class="r" style="left:621px;top:523px;width:73px;height:16px;background:#ededed"></div>
<div class="r" style="left:698px;top:523px;width:564px;height:16px;background:#ededed"></div>
<svg class="r" style="left:510px;top:527px;" width="5" height="8" viewBox="0 0 5 8"><path d="M4.5 0.5 L0.5 4 L4.5 7.5Z" fill="#888"/></svg>
<svg class="r" style="left:625px;top:527px;" width="5" height="8" viewBox="0 0 5 8"><path d="M4.5 0.5 L0.5 4 L4.5 7.5Z" fill="#888"/></svg>
<svg class="r" style="left:608px;top:527px;" width="5" height="8" viewBox="0 0 5 8"><path d="M0.5 0.5 L4.5 4 L0.5 7.5Z" fill="#888"/></svg>
<svg class="r" style="left:684px;top:527px;" width="5" height="8" viewBox="0 0 5 8"><path d="M0.5 0.5 L4.5 4 L0.5 7.5Z" fill="#888"/></svg>
<div class="r" style="left:698px;top:523px;width:564px;height:16px;background:linear-gradient(#ededed,#f3f3f3)"></div>
<svg class="r" style="left:704px;top:527px;" width="5" height="8" viewBox="0 0 5 8"><path d="M4.5 0.5 L0.5 4 L4.5 7.5Z" fill="#555"/></svg>
<svg class="r" style="left:1251px;top:527px;" width="5" height="8" viewBox="0 0 5 8"><path d="M0.5 0.5 L4.5 4 L0.5 7.5Z" fill="#555"/></svg>
<div class="r" style="left:716px;top:524px;width:173px;height:14px;background:linear-gradient(#f4f4f4,#e4e4e4 50%,#d6d6d6 51%,#cfcfcf);border:1px solid #9a9a9a;border-radius:2px;box-sizing:border-box"></div>
<svg class="r" style="left:798px;top:527px;" width="8" height="8" viewBox="0 0 8 8"><path d="M1.5 0 V7 M3.5 0 V7 M5.5 0 V7" stroke="#555" stroke-width="1"/></svg>
<div class="r" style="left:1262px;top:74px;width:18px;height:466px;background:#efefef;border-left:1px solid #e0e0e0;box-sizing:border-box"></div>
<svg class="r" style="left:1268px;top:79px;" width="9" height="5" viewBox="0 0 9 5"><path d="M0 5 L4.5 0.5 L9 5Z" fill="#a0a0a0"/></svg>
<svg class="r" style="left:1266px;top:527px;" width="10" height="6" viewBox="0 0 10 6"><path d="M0.5 0.5 L5 5.5 L9.5 0.5Z" fill="#999"/></svg>
<div class="r" style="left:475px;top:539px;width:805px;height:27px;background:#f0f0f0"></div>
<div class="r" style="left:744px;top:541px;width:270px;height:21px;background:linear-gradient(#e9e9e9,#dcdcdc);border:1px solid #9a9a9a;border-bottom:none;box-sizing:border-box"></div>
<div class="r" style="left:479px;top:540px;width:265px;height:23px;background:linear-gradient(#fafafa,#ececec 60%,#e6e6e6);border:1px solid #c4c4c4;border-bottom:none;box-sizing:border-box"></div>
<div class="r" style="left:479px;top:561px;width:265px;height:3px;background:linear-gradient(#42a4f4,#1f68c8)"></div>
<svg class="r" style="left:484px;top:543px;" width="16" height="16" viewBox="0 0 16 16"><rect x="0.5" y="0.5" width="15" height="15" rx="1" fill="#fff" stroke="#3a64b8"/><rect x="0" y="0" width="16" height="3.5" fill="#1f4fb0"/><path d="M2 8.5 H3.5 V6.5 H6.5 V8.5 H8 V6.5 H11 V8.5 H12.5 V6.5 H14" fill="none" stroke="#4f7ff0" stroke-width="1.2"/><path d="M2 12.5 H3.5 V10.5 H7 V12.5 H9.5 V10.5 H12.5 V12.5 H14" fill="none" stroke="#4f7ff0" stroke-width="1.2"/></svg>
<div class="t" style="left:410px;width:400px;text-align:center;top:545.84px;font-size:12px;color:#000;font-weight:normal;font-style:normal;">Default.wcfg*</div>
<svg class="r" style="left:723px;top:545px;" width="14" height="14" viewBox="0 0 14 14"><rect x="0.5" y="0.5" width="13" height="13" rx="2" fill="#e0855a" stroke="#c8603a"/><path d="M4 4 L10 10 M10 4 L4 10" stroke="#fff" stroke-width="2"/></svg>
<svg class="r" style="left:752px;top:542px;" width="14" height="16" viewBox="0 0 14 16"><path d="M0.5 0.5 H9.5 L13.5 4.5 V15.5 H0.5Z" fill="url(#gdoc)" stroke="#2b5fb4"/><path d="M3 5H8M3 8H11M3 10.5H11M3 13H11" stroke="#2b5fb4" stroke-width="1"/></svg>
<div class="t" style="left:679px;width:400px;text-align:center;top:546.43px;font-size:11.3px;color:#000;font-weight:normal;font-style:normal;">adder.v</div>
<svg class="r" style="left:990px;top:544px;" width="15" height="15" viewBox="0 0 15 15"><rect x="0.5" y="0.5" width="14" height="14" rx="2" fill="#c8c8c8" stroke="#a8a8a8"/><path d="M4 4 L11 11 M11 4 L4 11" stroke="#fff" stroke-width="2"/></svg>
<div class="r" style="left:425px;top:566px;width:2px;height:1px;background:#c4c4c4"></div>
<div class="r" style="left:430px;top:566px;width:2px;height:1px;background:#c4c4c4"></div>
<div class="r" style="left:435px;top:566px;width:2px;height:1px;background:#c4c4c4"></div>
<div class="r" style="left:440px;top:566px;width:2px;height:1px;background:#c4c4c4"></div>
<div class="r" style="left:445px;top:566px;width:2px;height:1px;background:#c4c4c4"></div>
<div class="r" style="left:450px;top:566px;width:2px;height:1px;background:#c4c4c4"></div>
<div class="r" style="left:455px;top:566px;width:2px;height:1px;background:#c4c4c4"></div>
<div class="r" style="left:460px;top:566px;width:2px;height:1px;background:#c4c4c4"></div>
<div class="r" style="left:465px;top:566px;width:2px;height:1px;background:#c4c4c4"></div>
<div class="r" style="left:470px;top:566px;width:2px;height:1px;background:#c4c4c4"></div>
<div class="r" style="left:475px;top:566px;width:2px;height:1px;background:#c4c4c4"></div>
<div class="r" style="left:480px;top:566px;width:2px;height:1px;background:#c4c4c4"></div>
<div class="r" style="left:485px;top:566px;width:2px;height:1px;background:#c4c4c4"></div>
<div class="r" style="left:490px;top:566px;width:2px;height:1px;background:#c4c4c4"></div>
<div class="r" style="left:495px;top:566px;width:2px;height:1px;background:#c4c4c4"></div>
<div class="r" style="left:500px;top:566px;width:2px;height:1px;background:#c4c4c4"></div>
<div class="r" style="left:505px;top:566px;width:2px;height:1px;background:#c4c4c4"></div>
<div class="r" style="left:510px;top:566px;width:2px;height:1px;background:#c4c4c4"></div>
<div class="r" style="left:515px;top:566px;width:2px;height:1px;background:#c4c4c4"></div>
<div class="r" style="left:520px;top:566px;width:2px;height:1px;background:#c4c4c4"></div>
<div class="r" style="left:525px;top:566px;width:2px;height:1px;background:#c4c4c4"></div>
<div class="r" style="left:530px;top:566px;width:2px;height:1px;background:#c4c4c4"></div>
<div class="r" style="left:535px;top:566px;width:2px;height:1px;background:#c4c4c4"></div>
<div class="r" style="left:540px;top:566px;width:2px;height:1px;background:#c4c4c4"></div>
<div class="r" style="left:545px;top:566px;width:2px;height:1px;background:#c4c4c4"></div>
<div class="r" style="left:550px;top:566px;width:2px;height:1px;background:#c4c4c4"></div>
<div class="r" style="left:555px;top:566px;width:2px;height:1px;background:#c4c4c4"></div>
<div class="r" style="left:560px;top:566px;width:2px;height:1px;background:#c4c4c4"></div>
<div class="r" style="left:565px;top:566px;width:2px;height:1px;background:#c4c4c4"></div>
<div class="r" style="left:570px;top:566px;width:2px;height:1px;background:#c4c4c4"></div>
<div class="r" style="left:575px;top:566px;width:2px;height:1px;background:#c4c4c4"></div>
<div class="r" style="left:580px;top:566px;width:2px;height:1px;background:#c4c4c4"></div>
<div class="r" style="left:585px;top:566px;width:2px;height:1px;background:#c4c4c4"></div>
<div class="r" style="left:590px;top:566px;width:2px;height:1px;background:#c4c4c4"></div>
<div class="r" style="left:595px;top:566px;width:2px;height:1px;background:#c4c4c4"></div>
<div class="r" style="left:600px;top:566px;width:2px;height:1px;background:#c4c4c4"></div>
<div class="r" style="left:605px;top:566px;width:2px;height:1px;background:#c4c4c4"></div>
<div class="r" style="left:610px;top:566px;width:2px;height:1px;background:#c4c4c4"></div>
<div class="r" style="left:615px;top:566px;width:2px;height:1px;background:#c4c4c4"></div>
<div class="r" style="left:620px;top:566px;width:2px;height:1px;background:#c4c4c4"></div>
<div class="r" style="left:625px;top:566px;width:2px;height:1px;background:#c4c4c4"></div>
<div class="r" style="left:630px;top:566px;width:2px;height:1px;background:#c4c4c4"></div>
<div class="r" style="left:635px;top:566px;width:2px;height:1px;background:#c4c4c4"></div>
<div class="r" style="left:640px;top:566px;width:2px;height:1px;background:#c4c4c4"></div>
<div class="r" style="left:645px;top:566px;width:2px;height:1px;background:#c4c4c4"></div>
<div class="r" style="left:650px;top:566px;width:2px;height:1px;background:#c4c4c4"></div>
<div class="r" style="left:655px;top:566px;width:2px;height:1px;background:#c4c4c4"></div>
<div class="r" style="left:660px;top:566px;width:2px;height:1px;background:#c4c4c4"></div>
<div class="r" style="left:665px;top:566px;width:2px;height:1px;background:#c4c4c4"></div>
<div class="r" style="left:670px;top:566px;width:2px;height:1px;background:#c4c4c4"></div>
<div class="r" style="left:675px;top:566px;width:2px;height:1px;background:#c4c4c4"></div>
<div class="r" style="left:680px;top:566px;width:2px;height:1px;background:#c4c4c4"></div>
<div class="r" style="left:685px;top:566px;width:2px;height:1px;background:#c4c4c4"></div>
<div class="r" style="left:690px;top:566px;width:2px;height:1px;background:#c4c4c4"></div>
<div class="r" style="left:695px;top:566px;width:2px;height:1px;background:#c4c4c4"></div>
<div class="r" style="left:700px;top:566px;width:2px;height:1px;background:#c4c4c4"></div>
<div class="r" style="left:705px;top:566px;width:2px;height:1px;background:#c4c4c4"></div>
<div class="r" style="left:710px;top:566px;width:2px;height:1px;background:#c4c4c4"></div>
<div class="r" style="left:715px;top:566px;width:2px;height:1px;background:#c4c4c4"></div>
<div class="r" style="left:720px;top:566px;width:2px;height:1px;background:#c4c4c4"></div>
<div class="r" style="left:725px;top:566px;width:2px;height:1px;background:#c4c4c4"></div>
<div class="r" style="left:730px;top:566px;width:2px;height:1px;background:#c4c4c4"></div>
<div class="r" style="left:735px;top:566px;width:2px;height:1px;background:#c4c4c4"></div>
<div class="r" style="left:740px;top:566px;width:2px;height:1px;background:#c4c4c4"></div>
<div class="r" style="left:745px;top:566px;width:2px;height:1px;background:#c4c4c4"></div>
<div class="r" style="left:750px;top:566px;width:2px;height:1px;background:#c4c4c4"></div>
<div class="r" style="left:755px;top:566px;width:2px;height:1px;background:#c4c4c4"></div>
<div class="r" style="left:760px;top:566px;width:2px;height:1px;background:#c4c4c4"></div>
<div class="r" style="left:765px;top:566px;width:2px;height:1px;background:#c4c4c4"></div>
<div class="r" style="left:770px;top:566px;width:2px;height:1px;background:#c4c4c4"></div>
<div class="r" style="left:775px;top:566px;width:2px;height:1px;background:#c4c4c4"></div>
<div class="r" style="left:780px;top:566px;width:2px;height:1px;background:#c4c4c4"></div>
<div class="r" style="left:785px;top:566px;width:2px;height:1px;background:#c4c4c4"></div>
<div class="r" style="left:790px;top:566px;width:2px;height:1px;background:#c4c4c4"></div>
<div class="r" style="left:795px;top:566px;width:2px;height:1px;background:#c4c4c4"></div>
<div class="r" style="left:800px;top:566px;width:2px;height:1px;background:#c4c4c4"></div>
<div class="r" style="left:805px;top:566px;width:2px;height:1px;background:#c4c4c4"></div>
<div class="r" style="left:810px;top:566px;width:2px;height:1px;background:#c4c4c4"></div>
<div class="r" style="left:815px;top:566px;width:2px;height:1px;background:#c4c4c4"></div>
<div class="r" style="left:820px;top:566px;width:2px;height:1px;background:#c4c4c4"></div>
<div class="r" style="left:825px;top:566px;width:2px;height:1px;background:#c4c4c4"></div>
<div class="r" style="left:830px;top:566px;width:2px;height:1px;background:#c4c4c4"></div>
<div class="r" style="left:835px;top:566px;width:2px;height:1px;background:#c4c4c4"></div>
<div class="r" style="left:840px;top:566px;width:2px;height:1px;background:#c4c4c4"></div>
<div class="r" style="left:845px;top:566px;width:2px;height:1px;background:#c4c4c4"></div>
<div class="r" style="left:0px;top:570px;width:1280px;height:1px;background:#a0a0a0"></div>
<div class="r" style="left:0px;top:571px;width:1280px;height:16px;background:#ececec;border-right:1px solid #a0a0a0;border-left:1px solid #a0a0a0;box-sizing:border-box"></div>
<div class="r" style="left:0px;top:587px;width:1280px;height:1px;background:#b0b0b0"></div>
<div class="t " style="left:4px;top:574.28px;font-size:10.3px;color:#000;font-weight:normal;font-style:normal;">Console</div>
<svg class="r" style="left:1223px;top:574px;" width="11" height="9" viewBox="0 0 11 9"><path d="M0.5 4.5 H10.5" stroke="#000" stroke-width="1.2"/><path d="M0 4.5 L3 1.5 V7.5Z M11 4.5 L8 1.5 V7.5Z" fill="#000"/></svg>
<svg class="r" style="left:1237px;top:574px;" width="10" height="10" viewBox="0 0 10 10"><rect x="0.75" y="0.75" width="8.5" height="8.5" fill="none" stroke="#000" stroke-width="1.5"/><rect x="0.5" y="0.5" width="9" height="2" fill="#000"/></svg>
<svg class="r" style="left:1253px;top:574px;" width="9" height="9" viewBox="0 0 9 9"><rect x="3" y="0.75" width="5.25" height="4.5" fill="none" stroke="#000" stroke-width="1.5"/><rect x="0.75" y="3.5" width="5.25" height="4.75" fill="#ececec" stroke="#000" stroke-width="1.5"/><rect x="0.5" y="3.2" width="6" height="1.8" fill="#000"/><rect x="3" y="0.5" width="5.5" height="1.8" fill="#000"/></svg>
<svg class="r" style="left:1268px;top:574px;" width="9" height="9" viewBox="0 0 9 9"><path d="M1 1 L8 8 M8 1 L1 8" stroke="#000" stroke-width="1.6"/></svg>
<div class="r" style="left:0px;top:588px;width:1280px;height:2px;background:#f4f4f4"></div>
<div class="r" style="left:0px;top:590px;width:1280px;height:1px;background:#a0a0a0"></div>
<div class="r" style="left:0px;top:591px;width:1280px;height:115px;background:#fff;border-left:1px solid #a0a0a0;box-sizing:border-box"></div>
<div class="r" style="left:0px;top:706px;width:1280px;height:1px;background:#a0a0a0"></div>
<div class="t " style="left:4px;top:609.69px;font-size:11px;color:#000;font-weight:normal;font-style:normal;"># run 1000 ns</div>
<div class="t " style="left:4px;top:624.03px;font-size:10.6px;color:#000;font-weight:normal;font-style:normal;">Simulator is doing circuit initialization process.</div>
<div class="t " style="left:4px;top:637.69px;font-size:11px;color:#000;font-weight:normal;font-style:normal;">Stopped at time : 0 fs : </div>
<div class="t " style="left:5px;top:651.69px;font-size:11px;color:#000;font-weight:bold;font-style:normal;letter-spacing:0.8px">ISim&gt;</div>
<div class="t " style="left:4px;top:665.69px;font-size:11px;color:#000;font-weight:normal;font-style:normal;"># run all</div>
<div class="t " style="left:4px;top:679.98px;font-size:10.65px;color:#000;font-weight:normal;font-style:normal;">Finished circuit initialization process.</div>
<div class="t " style="left:5px;top:693.19px;font-size:11px;color:#000;font-weight:bold;font-style:normal;letter-spacing:0.8px">ISim&gt;</div>
<div class="t " style="left:118px;top:637.69px;font-size:11px;color:#0000ee;font-weight:normal;font-style:normal;text-decoration:underline">File "C:/projects/adder/adder.v" Line 35</div>
<div class="r" style="left:1263px;top:591px;width:17px;height:115px;background:#efefef;border-left:1px solid #e4e4e4;box-sizing:border-box"></div>
<svg class="r" style="left:1267px;top:596px;" width="9" height="5" viewBox="0 0 9 5"><path d="M0.5 4.5 L4.5 0.5 L8.5 4.5Z" fill="#666"/></svg>
<svg class="r" style="left:1267px;top:697px;" width="9" height="5" viewBox="0 0 9 5"><path d="M0.5 0.5 L4.5 4.5 L8.5 0.5Z" fill="#666"/></svg>
<div class="r" style="left:1264px;top:639px;width:15px;height:47px;background:linear-gradient(90deg,#f4f4f4,#e0e0e0);border:1px solid #9a9a9a;border-radius:2px;box-sizing:border-box"></div>
<svg class="r" style="left:1268px;top:658px;" width="8" height="8" viewBox="0 0 8 8"><path d="M0 1.5 H7 M0 3.5 H7 M0 5.5 H7" stroke="#555"/></svg>
<div class="r" style="left:82px;top:707px;width:113px;height:22px;background:linear-gradient(#f6f6f6,#e2e2e2);border:1px solid #a9a9a9;border-top:none;box-sizing:border-box"></div>

<div class="t " style="left:112px;top:713.11px;font-size:10.5px;color:#000;font-weight:normal;font-style:normal;">Compilation Log</div>
<svg class="r" style="left:86px;top:711px;" width="16" height="14" viewBox="0 0 16 14"><rect x="0.5" y="0.5" width="15" height="13" fill="#fff" stroke="#2a63b8"/><rect x="1" y="1" width="14" height="2" fill="#9cc0ec"/><path d="M3 5.5H13M3 7.5H13M3 9.5H13M3 11.5H10" stroke="#999" stroke-width="0.8"/></svg>
<div class="r" style="left:197px;top:707px;width:97px;height:22px;background:linear-gradient(#f6f6f6,#e2e2e2);border:1px solid #a9a9a9;border-top:none;box-sizing:border-box"></div>

<div class="t " style="left:229px;top:713.11px;font-size:10.5px;color:#000;font-weight:normal;font-style:normal;">Breakpoints</div>
<svg class="r" style="left:205px;top:711px;" width="12" height="12" viewBox="0 0 12 12"><circle cx="6" cy="6" r="5.5" fill="#dd0000"/><circle cx="4.5" cy="4.5" r="2" fill="#ff6060" opacity="0.6"/></svg>
<div class="r" style="left:296px;top:707px;width:134px;height:22px;background:linear-gradient(#f6f6f6,#e2e2e2);border:1px solid #a9a9a9;border-top:none;box-sizing:border-box"></div>

<div class="t " style="left:327px;top:713.11px;font-size:10.5px;color:#000;font-weight:normal;font-style:normal;">Find in Files Results</div>
<svg class="r" style="left:301px;top:710px;" width="17" height="15" viewBox="0 0 17 15"><path d="M0.5 3.5 H5 L6.5 2 H12 V14.5 H0.5Z" fill="#f0d04a" stroke="#b09020"/><path d="M0.5 14.5 L2 6 H16 L13.5 14.5Z" fill="#f8e070" stroke="#b09020"/><path d="M4 14 L5 8 L6.5 6 H8 V14Z M13 14 L12 8 L10.5 6 H9 V14Z" fill="#333"/></svg>
<div class="r" style="left:431px;top:707px;width:110px;height:22px;background:linear-gradient(#f6f6f6,#e2e2e2);border:1px solid #a9a9a9;border-top:none;box-sizing:border-box"></div>

<div class="t " style="left:462px;top:713.11px;font-size:10.5px;color:#000;font-weight:normal;font-style:normal;">Search Results</div>
<svg class="r" style="left:436px;top:710px;" width="16" height="15" viewBox="0 0 16 15"><rect x="0.5" y="0.5" width="13" height="13" fill="#fff" stroke="#2a63b8"/><rect x="1" y="1" width="12" height="2" fill="#9cc0ec"/><path d="M3 5.5H11M3 8H8" stroke="#999"/><path d="M7 14.5 L7.5 10 L9 9 V14.5Z M14 14.5 L13.5 10 L12 9 V14.5Z" fill="#333"/></svg>
<div class="r" style="left:0px;top:706px;width:82px;height:25px;background:#fff;border:1px solid #a9a9a9;border-top:none;box-sizing:border-box"></div>
<svg class="r" style="left:6px;top:711px;" width="16" height="14" viewBox="0 0 16 14"><rect x="0.5" y="0.5" width="15" height="13" fill="#9cc0ec" stroke="#6a9ad0"/><rect x="2" y="2" width="12" height="10" fill="#2e2e38"/><path d="M3.5 4 L5.5 5.5 L3.5 7 M6 7 H9" stroke="#ddd" stroke-width="0.9" fill="none"/></svg>
<div class="t " style="left:33px;top:713.61px;font-size:10.5px;color:#000;font-weight:normal;font-style:normal;">Console</div>
<div class="r" style="left:0px;top:706px;width:1280px;height:1px;background:#a0a0a0"></div>
<div class="r" style="left:1153px;top:734px;width:126px;height:24px;background:#f0f0f0;border:1px solid #a0a0a0;border-bottom-color:#e4e4e4;box-sizing:border-box"></div>
<div class="t " style="left:1157px;top:741.43px;font-size:11.3px;color:#000;font-weight:normal;font-style:normal;">Sim Time: 1,000,000 ps</div>
<div class="r" style="left:0px;top:760px;width:1280px;height:1px;background:#2e3b4a"></div>
<div class="r" style="left:0px;top:761px;width:1280px;height:39px;background:linear-gradient(90deg,#8c9fb7 0%,#93a8c1 4%,#a3bad6 10%,#a7bfdb 40%,#a9c2de 83.5%,#90a6c1 85.5%,#7d91ab 88%,#7a8da6 100%)"></div>
<div class="r" style="left:0px;top:761px;width:1280px;height:1px;background:rgba(255,255,255,0.35)"></div>
<svg class="r" style="left:8px;top:761px;" width="40" height="39" viewBox="0 0 40 39"><circle cx="19" cy="19" r="18" fill="url(#gorb)" stroke="#1a4a78" stroke-width="1.2"/><circle cx="19" cy="19" r="17" fill="none" stroke="#c8d8e8" stroke-width="0.6" opacity="0.6"/><ellipse cx="19" cy="11" rx="13" ry="8" fill="#fff" opacity="0.22"/><path d="M8.5 9.5 Q12.5 7 17.5 9 L16 17 Q12 15 7 17.5Z" fill="#f0602a"/><path d="M19 9.3 Q23.5 11.5 29.5 8.5 L28 16.5 Q23 19 17.5 17.3Z" fill="#8cc440"/><path d="M6.8 19 Q11.5 16.5 15.8 18.5 L14.3 26.5 Q10 24.5 5.5 27Z" fill="#2aa0e8"/><path d="M17.3 19 Q22.5 20.5 28 18 L26.5 26 Q21.5 28.5 15.8 26.8Z" fill="#fcc21a"/><ellipse cx="19" cy="33" rx="10" ry="4" fill="#30e0ff" opacity="0.45"/></svg>
<svg class="r" style="left:72px;top:766px;" width="35" height="31" viewBox="0 0 35 31"><path d="M1 3 H8 L10 1.5 H20 V6 H33 V26 H1Z" fill="#efd48a" stroke="#c9a650" stroke-width="1"/><rect x="3" y="2" width="6" height="2" fill="#fff"/><rect x="3.5" y="2" width="2.5" height="1.6" fill="#22b022"/><rect x="11" y="4" width="8" height="2" fill="#fff"/><rect x="11.5" y="4" width="2.5" height="1.6" fill="#e02828"/><rect x="19" y="6.5" width="8" height="2" fill="#fff"/><rect x="19.5" y="6.5" width="2.5" height="1.6" fill="#1a90e0"/><path d="M1 9 H33 V26 H1Z" fill="#f8e4a8" stroke="#d4b060" stroke-width="1"/><path d="M4 16 L10 12" stroke="#fff" stroke-width="1" opacity="0.7"/><path d="M4.5 30 V18.5 H28.5 V30 M10 30 V23 H23 V30" fill="none" stroke="#78c4f0" stroke-width="3"/><path d="M4.5 30 V18.5 H28.5 V30 M10 30 V23 H23 V30" fill="none" stroke="#3a8fd0" stroke-width="0.8"/></svg>
<svg class="r" style="left:134px;top:762px;" width="36" height="35" viewBox="0 0 36 35"><circle cx="17.3" cy="17.3" r="15.5" fill="url(#gfox)"/><circle cx="19.8" cy="14" r="11" fill="url(#gglobe)"/><path d="M24 3 C30 6 33 12 32.8 17.3 C32.8 22 31 25 29 27.5 C30.5 21 30 12 24 3Z" fill="#f6b02a"/><path d="M2 17 C2 10 4.5 6 5.5 3 L8.5 6.8 L12 4 L12.8 8.5 L16 11 L12.8 12.3 C10.5 13.3 10 16.5 11.5 19 C13.5 22.5 19.5 23 23.5 21.5 C21.5 23.8 19.5 24.3 17.5 24.5 C22 25.5 27 24.5 30 21.5 C27.5 28.5 22.5 32.8 17.3 32.8 C9 32.8 2 26 2 17Z" fill="#e5621a"/><path d="M4 21 C6 28 13 32 20 31" fill="none" stroke="#c83e0a" stroke-width="1.5" opacity="0.7"/><path d="M5 9 C4 13 4 17 6 21" fill="none" stroke="#f8a040" stroke-width="1.5" opacity="0.8"/></svg>
<div class="r" style="left:184px;top:761px;width:59px;height:38px;background:linear-gradient(#d6e2f1,#bdd0e7);border:1px solid #8193ac;border-radius:3px;box-sizing:border-box;box-shadow:inset 0 0 0 1px rgba(255,255,255,0.5)"></div>
<svg class="r" style="left:197px;top:766px;" width="33" height="29" viewBox="0 0 33 29"><path d="M0 0 H17 L32 14 H15Z" fill="#d8d840"/><path d="M15 14 H32 L17 28 H0Z" fill="#a8a81a"/></svg>
<div class="r" style="left:246px;top:761px;width:59px;height:38px;background:linear-gradient(#cbdaee,#b6cae3);border:1px solid #8193ac;border-radius:3px;box-sizing:border-box;box-shadow:inset 0 0 0 1px rgba(255,255,255,0.45)"></div>
<svg class="r" style="left:258px;top:764px;" width="34" height="33" viewBox="0 0 34 33"><rect x="1" y="1" width="30" height="30" rx="2" fill="url(#gisim)" stroke="#9ab0d0"/><path d="M2 9 H10 V5 H20 V9 H30 M2 18 H8 V14 H16 V20 H24" stroke="#e4f0fc" stroke-width="2.2" fill="none" opacity="0.85"/><circle cx="24" cy="21" r="7.5" fill="#d4d8dc" stroke="#555" stroke-width="1.4"/><circle cx="24" cy="21" r="2.5" fill="#333"/><path d="M19 16 L29 26 M29 16 L19 26 M24 14 V28 M17 21 H31" stroke="#555" stroke-width="0.9"/><rect x="1" y="23" width="20" height="9" fill="#fff"/><text x="11" y="31" font-size="9" text-anchor="middle" font-family="Liberation Sans" font-weight="bold" fill="#0a2a7a">ISIm</text><path d="M29 26 L32 30" stroke="#d02020" stroke-width="1.5"/></svg>
<svg class="r" style="left:1103px;top:779px;" width="9" height="5" viewBox="0 0 9 5"><path d="M0 5 L4.5 0 L9 5Z" fill="#fff"/></svg>
<svg class="r" style="left:1122px;top:773px;" width="17" height="16" viewBox="0 0 17 16"><path d="M1.5 0.5 V15.5" stroke="#fff" stroke-width="2"/><path d="M2.5 1 C6 -0.5 9 3 12 2 L16 2.5 L13.5 6 L16 9 C12 10 9 7 2.5 9Z" fill="#fff" stroke="#555" stroke-width="0.6"/></svg>
<svg class="r" style="left:1146px;top:773px;" width="18" height="16" viewBox="0 0 18 16"><rect x="5.5" y="4.5" width="12" height="9" fill="#3e4e62" stroke="#fff" stroke-width="1.3"/><path d="M8 15.5 H15" stroke="#fff" stroke-width="1.5"/><rect x="0.5" y="0.5" width="5" height="6" fill="none" stroke="#fff" stroke-width="1.2"/><path d="M3 6.5 V13" stroke="#fff" stroke-width="1.5"/></svg>
<svg class="r" style="left:1170px;top:774px;" width="18" height="15" viewBox="0 0 18 15"><path d="M0.5 4.5 H4 L9 0.5 V14.5 L4 10.5 H0.5Z" fill="#fff" stroke="#555" stroke-width="0.6"/><path d="M11 4 Q13 7.5 11 11 M13.5 2 Q17 7.5 13.5 13" fill="none" stroke="#fff" stroke-width="1.4"/></svg>
<div class="t" style="left:1030px;width:400px;text-align:center;top:766.84px;font-size:12px;color:#fff;font-weight:normal;font-style:normal;">4:09 PM</div>
<div class="t" style="left:1030px;width:400px;text-align:center;top:784.84px;font-size:12px;color:#fff;font-weight:normal;font-style:normal;">11/7/2012</div>
<div class="r" style="left:1266px;top:761px;width:14px;height:39px;background:linear-gradient(90deg,#5a6b80,#8698b0);border:1px solid #4a5a70;box-sizing:border-box"></div>
<svg class="r" style="left:0px;top:0px;" width="1280" height="800" viewBox="0 0 1280 800"><ellipse cx="782" cy="258.5" rx="30" ry="145.2" fill="none" stroke="#ff0000" stroke-width="3"/><ellipse cx="611.4" cy="551.8" rx="135.5" ry="15.7" fill="none" stroke="#ff0000" stroke-width="2.4"/></svg></body></html>
